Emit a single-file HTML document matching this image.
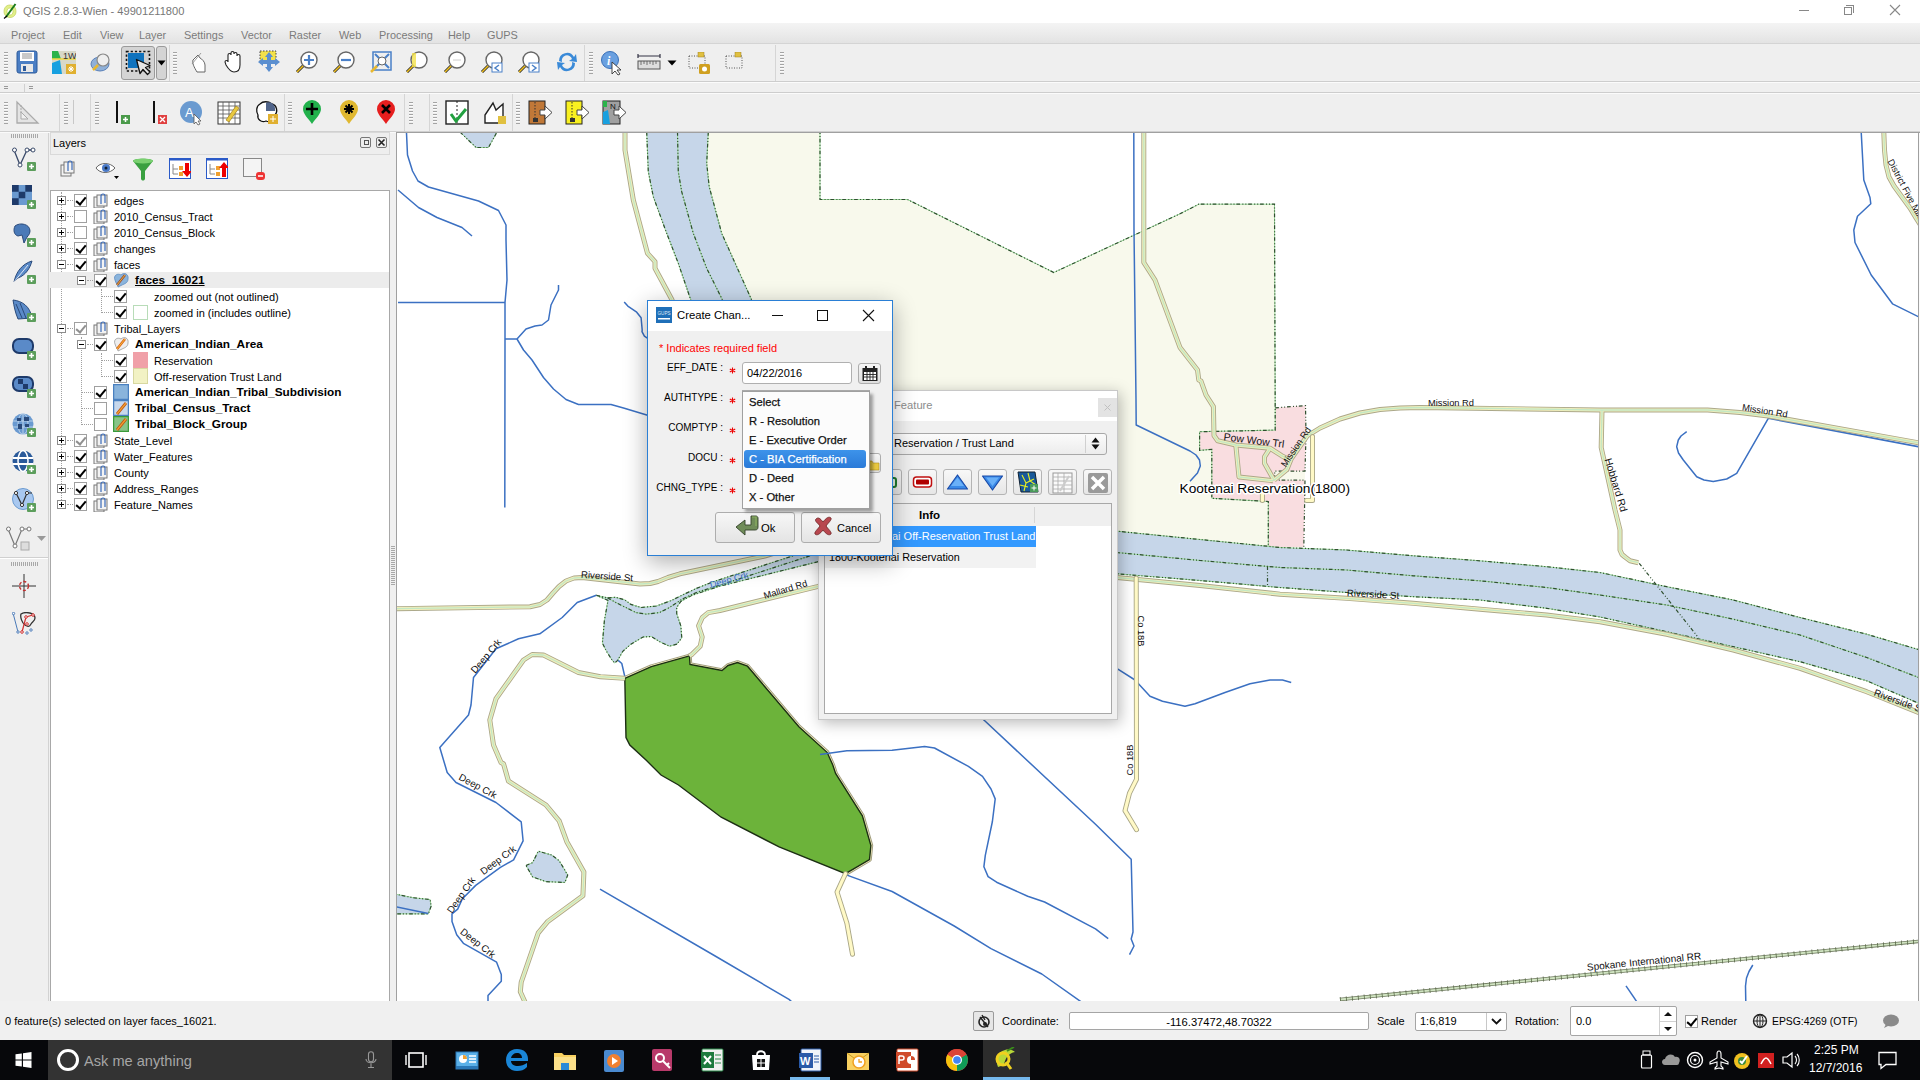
<!DOCTYPE html><html><head><meta charset="utf-8"><style>
*{box-sizing:border-box;margin:0;padding:0}
html,body{width:1920px;height:1080px;overflow:hidden;background:#f0f0f0;font-family:"Liberation Sans",sans-serif;font-size:11px;color:#000}
.a{position:absolute}
.t{position:absolute;white-space:nowrap;line-height:13px}
.grip{position:absolute;width:4px;background:repeating-linear-gradient(#a4a4a4 0 1px,#fbfbfb 1px 2px,transparent 2px 3px)}
.hgrip{position:absolute;height:4px;background:repeating-linear-gradient(90deg,#a8a8a8 0 1px,transparent 1px 2px)}
.vsep{position:absolute;width:1px;background:#d5d5d5}
.exp{position:absolute;width:9px;height:9px;border:1px solid #8c8c8c;background:#fff}
.exp:before{content:"";position:absolute;left:1px;top:3px;width:5px;height:1px;background:#000}
.exp.p:after{content:"";position:absolute;left:3px;top:1px;width:1px;height:5px;background:#000}
.cb{position:absolute;width:13px;height:13px;border:1px solid #a0a0a0;background:#fff}
.cb.c:after{content:"";position:absolute;left:3px;top:0px;width:4px;height:8px;border:solid #000;border-width:0 2px 2px 0;transform:rotate(40deg)}
.cb.g:after{border-color:#909090}
.lt{position:absolute;font-size:11px;line-height:13px;white-space:nowrap}
.b{font-weight:bold;font-size:11.8px}
.dl{position:absolute;border-left:1px dotted #a0a0a0}
.dh{position:absolute;border-top:1px dotted #a0a0a0}
.btn{position:absolute;border:1px solid #adadad;border-radius:2px;background:linear-gradient(#f6f6f6,#dedede)}
.ml{position:absolute;font-size:9.3px;white-space:nowrap;line-height:11px;color:#111}
</style></head><body>
<div class="a" style="left:0;top:0;width:1920px;height:23px;background:#fff">
<svg class="a" style="left:3px;top:3px" width="14" height="16" viewBox="0 0 14 16">
<path d="M7 2 C2.5 2 1 5.5 1 8.5 C1 12 3.5 14.5 7 14.5 C10.5 14.5 13 12 13 8.5 C13 5 11 2 7 2Z M7 5 C9 5 10 6.5 10 8.5 C10 10.5 9 12 7 12 C5 12 4 10.5 4 8.5 C4 6.5 5 5 7 5Z" fill="#e2ef8a" stroke="#b7c94a" stroke-width="0.6"/>
<path d="M3 14 L12.5 1" stroke="#1a7a1a" stroke-width="2"/><path d="M1 15.5 L4 13" stroke="#000" stroke-width="1.2"/>
</svg>
<div class="t" style="left:23px;top:5px;font-size:11.1px;color:#777">QGIS 2.8.3-Wien - 49901211800</div>
<div class="a" style="left:1799px;top:10px;width:10px;height:1px;background:#888"></div>
<div class="a" style="left:1844px;top:7px;width:8px;height:8px;border:1px solid #888"></div>
<div class="a" style="left:1846px;top:5px;width:8px;height:8px;border-top:1px solid #888;border-right:1px solid #888"></div>
<svg class="a" style="left:1889px;top:4px" width="12" height="12"><path d="M1 1L11 11M11 1L1 11" stroke="#888" stroke-width="1.1"/></svg>
</div>
<div class="a" style="left:0;top:23px;width:1920px;height:21px;background:linear-gradient(#f4f4f4,#e3e3e3);border-bottom:1px solid #d4d4d4">
<span class="t" style="left:11px;top:6px;font-size:10.9px;color:#7b7b7b">Project</span>
<span class="t" style="left:63px;top:6px;font-size:10.9px;color:#7b7b7b">Edit</span>
<span class="t" style="left:100px;top:6px;font-size:10.9px;color:#7b7b7b">View</span>
<span class="t" style="left:139px;top:6px;font-size:10.9px;color:#7b7b7b">Layer</span>
<span class="t" style="left:184px;top:6px;font-size:10.9px;color:#7b7b7b">Settings</span>
<span class="t" style="left:241px;top:6px;font-size:10.9px;color:#7b7b7b">Vector</span>
<span class="t" style="left:289px;top:6px;font-size:10.9px;color:#7b7b7b">Raster</span>
<span class="t" style="left:339px;top:6px;font-size:10.9px;color:#7b7b7b">Web</span>
<span class="t" style="left:379px;top:6px;font-size:10.9px;color:#7b7b7b">Processing</span>
<span class="t" style="left:448px;top:6px;font-size:10.9px;color:#7b7b7b">Help</span>
<span class="t" style="left:487px;top:6px;font-size:10.9px;color:#7b7b7b">GUPS</span>
</div>
<div class="a" style="left:0;top:44px;width:1920px;height:38px;background:#efefef;border-bottom:1px solid #cdcdcd"></div>
<div class="a" style="left:0;top:82px;width:1920px;height:1px;background:#fbfbfb"></div>
<div class="a" style="left:0;top:83px;width:1920px;height:10px;background:#efefef;border-bottom:1px solid #cdcdcd"></div>
<div class="a" style="left:0;top:93px;width:1920px;height:1px;background:#fbfbfb"></div>
<div class="a" style="left:0;top:94px;width:1920px;height:38px;background:#efefef"></div>
<div class="a" style="left:0;top:131px;width:1920px;height:1px;background:#d0d0d0"></div>
<div class="a" style="left:4px;top:86px;width:4px;height:1px;background:#999"></div><div class="a" style="left:4px;top:88px;width:4px;height:1px;background:#999"></div>
<div class="a" style="left:24px;top:84px;width:1px;height:9px;background:#d0d0d0"></div>
<div class="a" style="left:29px;top:86px;width:4px;height:1px;background:#999"></div><div class="a" style="left:29px;top:88px;width:4px;height:1px;background:#999"></div>
<div class="grip" style="left:4px;top:52px;height:22px"></div>
<div class="grip" style="left:173px;top:52px;height:22px"></div>
<div class="grip" style="left:589px;top:52px;height:22px"></div>
<div class="grip" style="left:780px;top:52px;height:22px"></div>
<div class="vsep" style="left:169px;top:45px;height:36px"></div>
<div class="vsep" style="left:584px;top:45px;height:36px"></div>
<div class="vsep" style="left:775px;top:45px;height:36px"></div>
<div class="grip" style="left:4px;top:102px;height:22px"></div>
<div class="grip" style="left:64px;top:102px;height:22px"></div>
<div class="grip" style="left:95px;top:102px;height:22px"></div>
<div class="grip" style="left:288px;top:102px;height:22px"></div>
<div class="grip" style="left:409px;top:102px;height:22px"></div>
<div class="grip" style="left:433px;top:102px;height:22px"></div>
<div class="grip" style="left:516px;top:102px;height:22px"></div>
<div class="vsep" style="left:59px;top:94px;height:37px"></div>
<div class="vsep" style="left:90px;top:94px;height:37px"></div>
<div class="vsep" style="left:284px;top:94px;height:37px"></div>
<div class="vsep" style="left:404px;top:94px;height:37px"></div>
<div class="vsep" style="left:429px;top:94px;height:37px"></div>
<div class="vsep" style="left:512px;top:94px;height:37px"></div>
<div class="vsep" style="left:73px;top:100px;height:24px;background:#c8c8c8"></div>
<svg class="a" style="left:16px;top:50px" width="24" height="24" viewBox="0 0 24 24"><rect x="1" y="1" width="20" height="22" rx="2" fill="#4a7ec4" stroke="#2d5a9a"/><rect x="4" y="2" width="14" height="9" fill="#fff"/><path d="M6 4h10M6 6h10M6 8h10" stroke="#777" stroke-width="0.8"/><rect x="5" y="14" width="12" height="8" fill="#e8e8e8"/><rect x="7" y="16" width="3" height="5" fill="#2d5a9a"/></svg>
<svg class="a" style="left:52px;top:50px" width="24" height="24" viewBox="0 0 24 24"><rect x="0" y="1" width="24" height="23" fill="#d8d8c8"/><path d="M0 1h6l3 8H0z" fill="#2bb34a"/><path d="M0 13 L8 10 L10 24 H0z" fill="#16a0e0"/><path d="M0 9h24" stroke="#f0d840" stroke-width="1.5"/><text x="11" y="9" font-size="9" font-family="Liberation Sans" fill="#333">1W</text><rect x="14" y="14" width="10" height="10" fill="#e0b030"/><path d="M19 16v6M16 19h6M17 17l4 4M21 17l-4 4" stroke="#fff" stroke-width="1"/></svg>
<svg class="a" style="left:89px;top:50px" width="24" height="24" viewBox="0 0 24 24"><ellipse cx="11" cy="14" rx="9" ry="7" fill="#8fb0d8" stroke="#5a80b8"/><circle cx="14" cy="10" r="6" fill="#eee" stroke="#888" stroke-width="1.2"/><path d="M9 15L4 20" stroke="#e8b830" stroke-width="2.5"/></svg>
<div class="a" style="left:121px;top:46px;width:34px;height:34px;border:1px solid #9a9a9a;border-radius:3px;background:#d4d4d4"></div>
<div class="a" style="left:156px;top:46px;width:11px;height:34px;border:1px solid #9a9a9a;border-radius:3px;background:#d4d4d4"></div>
<svg class="a" style="left:157px;top:60px" width="9" height="6"><path d="M0.5 0.5h8l-4 5z" fill="#000"/></svg>
<svg class="a" style="left:121px;top:46px" width="34" height="34" viewBox="0 0 34 34"><rect x="5.5" y="5.5" width="23" height="19.5" fill="#cfcfcf" stroke="#111" stroke-width="1.6" stroke-dasharray="2.2 2"/><rect x="7" y="7" width="16" height="15" fill="#0f72bd"/><path d="M15.5 13.5 L19 27.5 L22 23.5 L26.5 28.5 L29 26 L24.5 21.5 L29 19.5 Z" fill="#e6e6e6" stroke="#111" stroke-width="1.3" stroke-linejoin="round"/></svg>
<svg class="a" style="left:188px;top:50px" width="24" height="24" viewBox="0 0 24 24"><path d="M9 22 C6 17 4 13 5 10 L10 5 L12 8 C14 9 17 12 17 15 L17 22 Z" fill="#fff" stroke="#666" stroke-width="1"/><path d="M4 14 L13 3" stroke="#888" stroke-width="0.8"/></svg>
<svg class="a" style="left:222px;top:49px" width="24" height="24" viewBox="0 0 24 24"><path d="M6 13 V6 a1.5 1.5 0 0 1 3 0 V4 a1.5 1.5 0 0 1 3 0 V5 a1.5 1.5 0 0 1 3 0 V7 a1.5 1.5 0 0 1 3 0 V16 C18 20 16 23 12 23 C9 23 7 21 4 16 L3 13 a1.5 1.5 0 0 1 3 0z" fill="#fff" stroke="#222" stroke-width="1.1"/></svg>
<svg class="a" style="left:257px;top:50px" width="24" height="24" viewBox="0 0 24 24"><rect x="3" y="1" width="16" height="12" fill="#f3e14a" stroke="#444" stroke-dasharray="1.5 1.5"/><path d="M12 2 L8 7 H16Z M12 22 L8 17 H16Z M1 12 L6 8 V16Z M23 12 L18 8 V16Z" fill="#5b8fd0"/><rect x="10" y="7" width="4" height="10" fill="#5b8fd0"/><rect x="6" y="10" width="12" height="4" fill="#5b8fd0"/></svg>
<svg class="a" style="left:295px;top:50px" width="24" height="24" viewBox="0 0 24 24"><circle cx="14" cy="10" r="8" fill="#fff" stroke="#666" stroke-width="1.4"/><path d="M8 16 L2 22" stroke="#222" stroke-width="3"/><path d="M8 16 L2 22" stroke="#f0c020" stroke-width="1.6"/><path d="M14 5v10M9 10h10" stroke="#4a80c8" stroke-width="2.2"/></svg>
<svg class="a" style="left:332px;top:50px" width="24" height="24" viewBox="0 0 24 24"><circle cx="14" cy="10" r="8" fill="#fff" stroke="#666" stroke-width="1.4"/><path d="M8 16 L2 22" stroke="#222" stroke-width="3"/><path d="M8 16 L2 22" stroke="#f0c020" stroke-width="1.6"/><path d="M9 10h10" stroke="#4a80c8" stroke-width="2.2"/></svg>
<svg class="a" style="left:369px;top:50px" width="24" height="24" viewBox="0 0 24 24"><rect x="4" y="2" width="18" height="18" fill="none" stroke="#4a80c8" stroke-width="1.5"/><path d="M6 4l5 5M20 4l-5 5M6 18l5-5M20 18l-5-5" stroke="#4a80c8" stroke-width="2"/><circle cx="13" cy="11" r="4" fill="#fff" stroke="#666"/><path d="M8 16L2 22" stroke="#e8b830" stroke-width="2.5"/></svg>
<svg class="a" style="left:405px;top:50px" width="24" height="24" viewBox="0 0 24 24"><circle cx="14" cy="10" r="8" fill="#fff" stroke="#666" stroke-width="1.4"/><path d="M8 16 L2 22" stroke="#222" stroke-width="3"/><path d="M8 16 L2 22" stroke="#f0c020" stroke-width="1.6"/><rect x="7" y="3" width="4" height="14" fill="#f3e14a" opacity="0.8"/></svg>
<svg class="a" style="left:443px;top:50px" width="24" height="24" viewBox="0 0 24 24"><circle cx="14" cy="10" r="8" fill="#fff" stroke="#666" stroke-width="1.4"/><path d="M8 16 L2 22" stroke="#222" stroke-width="3"/><path d="M8 16 L2 22" stroke="#f0c020" stroke-width="1.6"/><path d="M10 10h8" stroke="#ccc" stroke-width="1"/></svg>
<svg class="a" style="left:480px;top:50px" width="24" height="24" viewBox="0 0 24 24"><circle cx="14" cy="10" r="8" fill="#fff" stroke="#666" stroke-width="1.4"/><path d="M8 16 L2 22" stroke="#222" stroke-width="3"/><path d="M8 16 L2 22" stroke="#f0c020" stroke-width="1.6"/><rect x="12" y="13" width="10" height="9" fill="#fff" stroke="#4a80c8"/><path d="M19 15l-4 3 4 3" stroke="#4a80c8" stroke-width="1.5" fill="none"/></svg>
<svg class="a" style="left:517px;top:50px" width="24" height="24" viewBox="0 0 24 24"><circle cx="14" cy="10" r="8" fill="#fff" stroke="#666" stroke-width="1.4"/><path d="M8 16 L2 22" stroke="#222" stroke-width="3"/><path d="M8 16 L2 22" stroke="#f0c020" stroke-width="1.6"/><rect x="12" y="13" width="10" height="9" fill="#fff" stroke="#4a80c8"/><path d="M15 15l4 3-4 3" stroke="#4a80c8" stroke-width="1.5" fill="none"/></svg>
<svg class="a" style="left:555px;top:50px" width="24" height="24" viewBox="0 0 24 24"><path d="M4 11 A8 8 0 0 1 19 7 L21 4 L22 12 L14 11 L17 9 A5 5 0 0 0 7 12 Z" fill="#3a8ad8"/><path d="M20 13 A8 8 0 0 1 5 17 L3 20 L2 12 L10 13 L7 15 A5 5 0 0 0 17 12 Z" fill="#3a8ad8"/></svg>
<svg class="a" style="left:600px;top:50px" width="25" height="26" viewBox="0 0 25 26"><circle cx="10" cy="10" r="8.5" fill="#6aa0e0" stroke="#3a70b8"/><text x="7" y="15" font-size="12" font-style="italic" font-weight="bold" font-family="Liberation Serif" fill="#fff">i</text><path d="M12 12 L12 24 L15 21 L18 25 L20 24 L17 20 L21 20Z" fill="#fff" stroke="#333" stroke-width="0.9"/></svg>
<svg class="a" style="left:637px;top:53px" width="24" height="18" viewBox="0 0 24 18"><path d="M1 3h22M1 1v4M23 1v4" stroke="#334" stroke-width="1.2"/><rect x="1" y="8" width="22" height="8" fill="#ddd" stroke="#555"/><path d="M4 8v4M7 8v3M10 8v4M13 8v3M16 8v4M19 8v3" stroke="#555" stroke-width="0.8"/></svg>
<svg class="a" style="left:667px;top:60px" width="10" height="6"><path d="M0.5 0.5h9l-4.5 5z" fill="#000"/></svg>
<svg class="a" style="left:688px;top:52px" width="24" height="24" viewBox="0 0 24 24"><rect x="1" y="4" width="16" height="12" fill="none" stroke="#555" stroke-dasharray="1 1.5"/><rect x="10" y="0" width="6" height="5" fill="#e0c040" stroke="#a08020" stroke-width="0.5"/><rect x="11" y="12" width="11" height="10" rx="1.5" fill="#d0a020"/><circle cx="16.5" cy="17" r="2.5" fill="#fff"/></svg>
<svg class="a" style="left:725px;top:52px" width="24" height="24" viewBox="0 0 24 24"><rect x="1" y="4" width="16" height="12" fill="none" stroke="#555" stroke-dasharray="1 1.5"/><rect x="10" y="0" width="6" height="5" fill="#e0c040" stroke="#a08020" stroke-width="0.5"/></svg>
<svg class="a" style="left:15px;top:100px" width="25" height="25" viewBox="0 0 25 25"><path d="M2 23 L2 2 L23 23 Z" fill="#e4e4e4" stroke="#aaa" stroke-width="1.3"/><path d="M6 19 V12 L13 19 Z" fill="#f0f0f0" stroke="#aaa"/><path d="M5 6h2M5 9h2M5 12h2" stroke="#aaa"/></svg>
<svg class="a" style="left:114px;top:100px" width="18" height="25" viewBox="0 0 18 25"><path d="M3 1 V23" stroke="#111" stroke-width="2"/><rect x="7" y="15" width="9" height="9" fill="#4a9a4a"/><path d="M11.5 17v5M9 19.5h5" stroke="#fff" stroke-width="1.5"/></svg>
<svg class="a" style="left:151px;top:100px" width="18" height="25" viewBox="0 0 18 25"><path d="M3 1 V23" stroke="#111" stroke-width="2"/><rect x="7" y="15" width="9" height="9" fill="#e04040"/><path d="M9 17l5 5M14 17l-5 5" stroke="#fff" stroke-width="1.3"/></svg>
<svg class="a" style="left:180px;top:100px" width="24" height="26" viewBox="0 0 24 26"><circle cx="11" cy="12" r="11" fill="#6a9ad0"/><text x="5" y="17" font-size="13" font-family="Liberation Sans" fill="#fff">A</text><path d="M14 14 L14 24 L16 22 L18 25 L20 24 L18 21 L21 21Z" fill="#fff" stroke="#555" stroke-width="0.8"/></svg>
<svg class="a" style="left:217px;top:100px" width="24" height="25" viewBox="0 0 24 25"><rect x="1" y="2" width="22" height="22" fill="#fff" stroke="#333"/><path d="M1 6h22M1 10h22M1 14h22M1 18h22M6 2v22M12 2v22M18 2v22" stroke="#555" stroke-width="0.8"/><path d="M9 20 L19 6 L22 8 L12 22 Z" fill="#e8c840" stroke="#a08020" stroke-width="0.7"/></svg>
<svg class="a" style="left:255px;top:100px" width="24" height="25" viewBox="0 0 24 25"><path d="M5 4 C1 6 1 12 3 15 C2 19 6 23 11 21 C15 23 20 20 20 15 C23 12 22 5 17 4 C13 1 8 1 5 4Z" fill="#fff" stroke="#111" stroke-width="1.3"/><path d="M11 3 C14 1 19 3 20 8 L20 11 L11 11 Z" fill="#50648a"/><rect x="13" y="14" width="10" height="10" fill="#e0b030"/><path d="M18 16v6M15 19h6" stroke="#fff"/></svg>
<svg class="a" style="left:302px;top:100px" width="20" height="25" viewBox="0 0 20 25"><path d="M10 24 C6 18 1 14 1 9 A9 9 0 0 1 19 9 C19 14 14 18 10 24Z" fill="#22b14c"/><path d="M10 3v12M4 9h12" stroke="#000" stroke-width="2.6"/></svg>
<svg class="a" style="left:339px;top:100px" width="20" height="25" viewBox="0 0 20 25"><path d="M10 24 C6 18 1 14 1 9 A9 9 0 0 1 19 9 C19 14 14 18 10 24Z" fill="#e0b830"/><path d="M10 4v10M5 9h10M6.5 5.5l7 7M13.5 5.5l-7 7" stroke="#000" stroke-width="2"/></svg>
<svg class="a" style="left:376px;top:100px" width="20" height="25" viewBox="0 0 20 25"><path d="M10 24 C6 18 1 14 1 9 A9 9 0 0 1 19 9 C19 14 14 18 10 24Z" fill="#e61e1e"/><path d="M6 5l8 8M14 5l-8 8" stroke="#000" stroke-width="2.6"/></svg>
<svg class="a" style="left:445px;top:100px" width="24" height="25" viewBox="0 0 24 25"><rect x="1" y="1" width="22" height="23" fill="#fff" stroke="#222" stroke-width="1.4"/><path d="M12 1v23" stroke="#222" stroke-dasharray="2 2"/><path d="M6 14 L11 21 L21 9" stroke="#22a040" stroke-width="3" fill="none"/></svg>
<svg class="a" style="left:483px;top:100px" width="24" height="25" viewBox="0 0 24 25"><path d="M2 23 L2 15 L10 3 L13 10 L20 4 L20 23 Z" fill="#fff" stroke="#222" stroke-width="1.4"/><rect x="15" y="16" width="8" height="8" fill="#e0c040"/></svg>
<svg class="a" style="left:528px;top:100px" width="25" height="25" viewBox="0 0 25 25"><rect x="1" y="1" width="16" height="23" fill="#c07838" stroke="#222"/><path d="M7 2v18" stroke="#333" stroke-dasharray="1.5 1.5"/><rect x="5" y="18" width="5" height="4" fill="#333"/><path d="M12 10h5v-4l7 6.5-7 6.5v-4h-5z" fill="#fff" stroke="#444"/></svg>
<svg class="a" style="left:565px;top:100px" width="25" height="25" viewBox="0 0 25 25"><rect x="1" y="1" width="16" height="23" fill="#f8f020" stroke="#222"/><path d="M7 2v18" stroke="#333" stroke-dasharray="1.5 1.5"/><rect x="5" y="18" width="5" height="4" fill="#333"/><path d="M12 10h5v-4l7 6.5-7 6.5v-4h-5z" fill="#fff" stroke="#444"/></svg>
<svg class="a" style="left:602px;top:100px" width="25" height="25" viewBox="0 0 25 25"><rect x="1" y="1" width="17" height="23" fill="#a0a0a0" stroke="#222"/><path d="M1 12 L6 10 L8 24 H1Z" fill="#18a0e0"/><path d="M1 1h4v6H1z" fill="#2bb34a"/><text x="8" y="9" font-size="8" font-family="Liberation Sans" fill="#111">N</text><path d="M12 10h5v-4l7 6.5-7 6.5v-4h-5z" fill="#fff" stroke="#444"/></svg>
<div class="a" style="left:0;top:132px;width:49px;height:869px;background:#efefef;border-right:1px solid #d2d2d2"></div>
<div class="hgrip" style="left:11px;top:134px;width:27px"></div>
<div class="hgrip" style="left:11px;top:562px;width:27px"></div>
<div class="a" style="left:0;top:557px;width:48px;height:1px;background:#d0d0d0"></div><div class="a" style="left:0;top:558px;width:48px;height:1px;background:#fff"></div>
<svg class="a" style="left:12px;top:147px" width="24" height="24" viewBox="0 0 24 24"><path d="M2 3 L8 18 L15 3 M15 3 H21" stroke="#3a4a6a" stroke-width="1.3" fill="none"/><circle cx="2.5" cy="3" r="2" fill="#fff" stroke="#3a4a6a"/><circle cx="8" cy="18" r="2" fill="#fff" stroke="#3a4a6a"/><circle cx="15" cy="3" r="2" fill="#fff" stroke="#3a4a6a"/><circle cx="21" cy="3" r="2" fill="#fff" stroke="#3a4a6a"/><rect x="15" y="15" width="9" height="9" rx="1" fill="#5c9e5c"/><path d="M19.5 17v5M17 19.5h5" stroke="#fff" stroke-width="1.6"/></svg>
<svg class="a" style="left:12px;top:185px" width="24" height="24" viewBox="0 0 24 24"><rect x="0" y="0" width="20" height="20" fill="#6a9ad0"/><path d="M0 0h6.7v6.7H0zM13.3 0h6.7v6.7h-6.7zM6.7 6.7h6.6v6.6H6.7zM0 13.3h6.7v6.7H0z" fill="#1e3a6a"/><rect x="15" y="15" width="9" height="9" rx="1" fill="#5c9e5c"/><path d="M19.5 17v5M17 19.5h5" stroke="#fff" stroke-width="1.6"/></svg>
<svg class="a" style="left:12px;top:223px" width="24" height="24" viewBox="0 0 24 24"><path d="M3 3 C8 -1 18 1 18 8 C18 12 15 13 14 16 L12 20 L10 12 L6 13 C2 12 1 7 3 3Z" fill="#4a7ab8" stroke="#2a4a7a"/><rect x="15" y="15" width="9" height="9" rx="1" fill="#5c9e5c"/><path d="M19.5 17v5M17 19.5h5" stroke="#fff" stroke-width="1.6"/></svg>
<svg class="a" style="left:12px;top:260px" width="24" height="24" viewBox="0 0 24 24"><path d="M2 22 C4 12 10 4 20 1 C18 8 14 15 6 18 Z" fill="#5a8ac8" stroke="#2a4a7a"/><path d="M2 22 L16 5" stroke="#fff" stroke-width="0.8"/><rect x="15" y="15" width="9" height="9" rx="1" fill="#5c9e5c"/><path d="M19.5 17v5M17 19.5h5" stroke="#fff" stroke-width="1.6"/></svg>
<svg class="a" style="left:12px;top:298px" width="24" height="24" viewBox="0 0 24 24"><path d="M1 2 C10 3 18 8 20 20 L6 21 C3 14 2 8 1 2Z" fill="#5a8ac8" stroke="#2a4a7a"/><path d="M4 6 L10 20M8 5 L14 20" stroke="#2a4a7a"/><rect x="15" y="15" width="9" height="9" rx="1" fill="#5c9e5c"/><path d="M19.5 17v5M17 19.5h5" stroke="#fff" stroke-width="1.6"/></svg>
<svg class="a" style="left:12px;top:338px" width="24" height="24" viewBox="0 0 24 24"><rect x="1" y="1" width="20" height="14" rx="6" fill="#5a8ac8" stroke="#1e3a6a" stroke-width="2"/><rect x="15" y="13" width="9" height="9" rx="1" fill="#5c9e5c"/><path d="M19.5 15v5M17 17.5h5" stroke="#fff" stroke-width="1.6"/></svg>
<svg class="a" style="left:12px;top:376px" width="24" height="24" viewBox="0 0 24 24"><rect x="1" y="1" width="20" height="14" rx="6" fill="#5a8ac8" stroke="#1e3a6a" stroke-width="2"/><path d="M6 3h5v5H6zM11 8h5v5h-5z" fill="#1e3a6a"/><rect x="15" y="13" width="9" height="9" rx="1" fill="#5c9e5c"/><path d="M19.5 15v5M17 17.5h5" stroke="#fff" stroke-width="1.6"/></svg>
<svg class="a" style="left:12px;top:413px" width="24" height="24" viewBox="0 0 24 24"><circle cx="11" cy="11" r="10.5" fill="#6a9ad0"/><ellipse cx="11" cy="11" rx="5" ry="10.5" fill="none" stroke="#cde" stroke-width="0.8"/><path d="M1 8h20M1 14h20M11 1v20" stroke="#cde" stroke-width="0.8"/><path d="M5 5h4v3H5zM12 4h5v4h-5zM6 11h4v5H6zM13 11h4v3h-4z" fill="#2a4a7a"/><rect x="15" y="15" width="9" height="9" rx="1" fill="#5c9e5c"/><path d="M19.5 17v5M17 19.5h5" stroke="#fff" stroke-width="1.6"/></svg>
<svg class="a" style="left:12px;top:450px" width="24" height="24" viewBox="0 0 24 24"><circle cx="11" cy="11" r="10.5" fill="#2a5a9a"/><path d="M1 8h20M1 14h20" stroke="#fff" stroke-width="2"/><ellipse cx="11" cy="11" rx="5" ry="10.5" fill="none" stroke="#fff" stroke-width="1.5"/><rect x="15" y="15" width="9" height="9" rx="1" fill="#5c9e5c"/><path d="M19.5 17v5M17 19.5h5" stroke="#fff" stroke-width="1.6"/></svg>
<svg class="a" style="left:12px;top:488px" width="24" height="24" viewBox="0 0 24 24"><circle cx="11" cy="11" r="10.5" fill="#a8c8f0" stroke="#6a9ad0"/><path d="M4 5 L10 17 L15 5 L20 5" stroke="#333" stroke-width="1.2" fill="none"/><circle cx="4" cy="5" r="1.6" fill="#fff" stroke="#333"/><circle cx="10" cy="17" r="1.6" fill="#fff" stroke="#333"/><circle cx="15" cy="5" r="1.6" fill="#fff" stroke="#333"/><rect x="15" y="15" width="9" height="9" rx="1" fill="#5c9e5c"/><path d="M19.5 17v5M17 19.5h5" stroke="#fff" stroke-width="1.6"/></svg>
<svg class="a" style="left:6px;top:526px" width="26" height="26" viewBox="0 0 26 26"><path d="M2 3 L9 20 L16 3 H24" stroke="#777" stroke-width="1.2" fill="none"/><circle cx="2.5" cy="3" r="2" fill="#fff" stroke="#777"/><circle cx="9" cy="20" r="2" fill="#fff" stroke="#777"/><circle cx="16" cy="3" r="2" fill="#fff" stroke="#777"/><circle cx="23" cy="3" r="2" fill="#fff" stroke="#777"/><rect x="15" y="16" width="8" height="8" fill="#ddd" stroke="#aaa"/></svg>
<svg class="a" style="left:37px;top:536px" width="9" height="5"><path d="M0 0h9l-4.5 5z" fill="#999"/></svg>
<svg class="a" style="left:12px;top:574px" width="24" height="24" viewBox="0 0 24 24"><path d="M12 0v24M0 12h24" stroke="#333" stroke-width="1"/><circle cx="12" cy="12" r="4.5" fill="none" stroke="#c03030" stroke-width="1.4" stroke-dasharray="3 2"/></svg>
<svg class="a" style="left:12px;top:612px" width="25" height="25" viewBox="0 0 25 25"><path d="M1 1 L6 20" stroke="#4a7ab8" stroke-width="1"/><circle cx="1.5" cy="1.5" r="1.2" fill="#fff" stroke="#4a7ab8"/><circle cx="6" cy="20" r="1.2" fill="#fff" stroke="#4a7ab8"/><path d="M9 2 C14 -1 23 1 23 6 C23 9 20 10 19 12 C17 16 15 14 13 13 C10 11 8 5 9 2Z" fill="none" stroke="#333" stroke-width="1.3"/><path d="M10 20 L14 5 L21 3" stroke="#d03030" stroke-width="1.2" fill="none"/><circle cx="14" cy="5" r="1.3" fill="#fff" stroke="#d03030"/><circle cx="21" cy="3" r="1.3" fill="#fff" stroke="#d03030"/><circle cx="10" cy="20" r="1.3" fill="#fff" stroke="#d03030"/><circle cx="15" cy="12" r="1.3" fill="#fff" stroke="#d03030"/><circle cx="15" cy="21" r="1.2" fill="#fff" stroke="#4a7ab8"/><circle cx="19" cy="18" r="1.2" fill="#fff" stroke="#4a7ab8"/></svg>
<div class="a" style="left:49px;top:132px;width:342px;height:869px;background:#f0f0f0"></div>
<div class="a" style="left:0;top:132px;width:396px;height:1px;background:#fafafa"></div>
<div class="a" style="left:391px;top:546px;width:4px;height:40px;background:repeating-linear-gradient(#a8a8a8 0 1px,transparent 1px 2px)"></div>
<div class="a" style="left:50px;top:132px;width:340px;height:23px;border:1px solid #d9d9d9;background:#eeeeee"></div>
<div class="t" style="left:53px;top:137px;font-size:11px">Layers</div>
<div class="a" style="left:360px;top:137px;width:11px;height:11px;border:1px solid #777;border-radius:2px"></div>
<div class="a" style="left:364px;top:140px;width:5px;height:5px;border:1px solid #555"></div>
<div class="a" style="left:376px;top:137px;width:11px;height:11px;border:1px solid #777;border-radius:2px"></div>
<svg class="a" style="left:376px;top:137px" width="11" height="11"><path d="M2.5 2.5l6 6M8.5 2.5l-6 6" stroke="#222" stroke-width="1.6"/></svg>
<svg class="a" style="left:60px;top:159px" width="16" height="18" viewBox="0 0 16 18"><rect x="1" y="6" width="10" height="11" fill="#f3f3f3" stroke="#777"/><rect x="4" y="3" width="10" height="11" fill="#f3f3f3" stroke="#777"/><path d="M8 12V4a2 2 0 0 1 4 0v7" stroke="#3a6ab8" stroke-width="1.2" fill="none"/></svg>
<svg class="a" style="left:95px;top:160px" width="21" height="17" viewBox="0 0 21 17"><path d="M1 8 C5 2 15 2 20 8 C15 14 5 14 1 8Z" fill="#fff" stroke="#666"/><circle cx="11" cy="8" r="4" fill="#4a7ac8"/><circle cx="11" cy="8" r="1.5" fill="#123"/></svg>
<svg class="a" style="left:114px;top:176px" width="5" height="3"><path d="M0 0h5l-2.5 3z" fill="#000"/></svg>
<svg class="a" style="left:132px;top:158px" width="22" height="23" viewBox="0 0 22 23"><path d="M1 3 C1 0 21 0 21 3 L13 13 V21 C12 23 10 23 9 21 V13 Z" fill="#3aa040"/><ellipse cx="11" cy="3" rx="10" ry="2.5" fill="#7ad070"/></svg>
<svg class="a" style="left:169px;top:158px" width="22" height="22" viewBox="0 0 22 22"><rect x="0.5" y="0.5" width="21" height="20" fill="#fff" stroke="#2a5ac8"/><rect x="0.5" y="0.5" width="21" height="2" fill="#2a5ac8"/><path d="M4 6v10h5M4 11h5" stroke="#888" fill="none"/><rect x="10" y="8" width="4" height="4" fill="#f0a030"/><rect x="10" y="14" width="4" height="4" fill="#f0a030"/><path d="M16 5v8h-3l5 6 5-6h-3V5z" fill="#e00"/></svg>
<svg class="a" style="left:206px;top:158px" width="22" height="22" viewBox="0 0 22 22"><rect x="0.5" y="0.5" width="21" height="20" fill="#fff" stroke="#2a5ac8"/><rect x="0.5" y="0.5" width="21" height="2" fill="#2a5ac8"/><path d="M4 6v10h5M4 11h5" stroke="#888" fill="none"/><rect x="10" y="8" width="4" height="4" fill="#f0a030"/><rect x="10" y="14" width="4" height="4" fill="#f0a030"/><path d="M16 19v-9h-3l5-6 5 6h-3v9z" fill="#e00"/></svg>
<svg class="a" style="left:243px;top:158px" width="23" height="23" viewBox="0 0 23 23"><rect x="0.5" y="0.5" width="18" height="18" fill="#f4f4f4" stroke="#888"/><rect x="13" y="14" width="9" height="8" rx="3" fill="#e33"/><path d="M15 18h5" stroke="#fff" stroke-width="1.5"/></svg>
<div class="a" style="left:50px;top:190px;width:340px;height:812px;background:#fff;border:1px solid #a8a8a8"></div>
<div class="dl" style="left:61px;top:192px;height:312px"></div>
<div class="dl" style="left:81px;top:337px;height:88px"></div>
<div class="dl" style="left:101px;top:289px;height:24px"></div>
<div class="dl" style="left:101px;top:353px;height:24px"></div>
<div class="a" style="left:50px;top:272px;width:339px;height:16px;background:#ececec"></div>
<div class="exp p" style="left:57px;top:196px"></div>
<div class="dh" style="left:67px;top:200px;width:6px"></div>
<div class="cb c" style="left:74px;top:194px"></div>
<svg class="a" style="left:93px;top:192px" width="16" height="16" viewBox="0 0 16 16"><rect x="1" y="5" width="10" height="11" fill="#f3f3f3" stroke="#777"/><rect x="4" y="3" width="10" height="11" fill="#f3f3f3" stroke="#777"/><path d="M8 12V4a2 2 0 0 1 4 0v7" stroke="#3a6ab8" stroke-width="1.2" fill="none"/></svg>
<div class="lt" style="left:114px;top:195px">edges</div>
<div class="exp p" style="left:57px;top:212px"></div>
<div class="dh" style="left:67px;top:216px;width:6px"></div>
<div class="cb " style="left:74px;top:210px"></div>
<svg class="a" style="left:93px;top:208px" width="16" height="16" viewBox="0 0 16 16"><rect x="1" y="5" width="10" height="11" fill="#f3f3f3" stroke="#777"/><rect x="4" y="3" width="10" height="11" fill="#f3f3f3" stroke="#777"/><path d="M8 12V4a2 2 0 0 1 4 0v7" stroke="#3a6ab8" stroke-width="1.2" fill="none"/></svg>
<div class="lt" style="left:114px;top:211px">2010_Census_Tract</div>
<div class="exp p" style="left:57px;top:228px"></div>
<div class="dh" style="left:67px;top:232px;width:6px"></div>
<div class="cb " style="left:74px;top:226px"></div>
<svg class="a" style="left:93px;top:224px" width="16" height="16" viewBox="0 0 16 16"><rect x="1" y="5" width="10" height="11" fill="#f3f3f3" stroke="#777"/><rect x="4" y="3" width="10" height="11" fill="#f3f3f3" stroke="#777"/><path d="M8 12V4a2 2 0 0 1 4 0v7" stroke="#3a6ab8" stroke-width="1.2" fill="none"/></svg>
<div class="lt" style="left:114px;top:227px">2010_Census_Block</div>
<div class="exp p" style="left:57px;top:244px"></div>
<div class="dh" style="left:67px;top:248px;width:6px"></div>
<div class="cb c" style="left:74px;top:242px"></div>
<svg class="a" style="left:93px;top:240px" width="16" height="16" viewBox="0 0 16 16"><rect x="1" y="5" width="10" height="11" fill="#f3f3f3" stroke="#777"/><rect x="4" y="3" width="10" height="11" fill="#f3f3f3" stroke="#777"/><path d="M8 12V4a2 2 0 0 1 4 0v7" stroke="#3a6ab8" stroke-width="1.2" fill="none"/></svg>
<div class="lt" style="left:114px;top:243px">changes</div>
<div class="exp " style="left:57px;top:260px"></div>
<div class="dh" style="left:67px;top:264px;width:6px"></div>
<div class="cb c" style="left:74px;top:258px"></div>
<svg class="a" style="left:93px;top:256px" width="16" height="16" viewBox="0 0 16 16"><rect x="1" y="5" width="10" height="11" fill="#f3f3f3" stroke="#777"/><rect x="4" y="3" width="10" height="11" fill="#f3f3f3" stroke="#777"/><path d="M8 12V4a2 2 0 0 1 4 0v7" stroke="#3a6ab8" stroke-width="1.2" fill="none"/></svg>
<div class="lt" style="left:114px;top:259px">faces</div>
<div class="exp" style="left:77px;top:276px"></div>
<div class="dh" style="left:87px;top:280px;width:6px"></div>
<div class="cb c" style="left:94px;top:274px"></div>
<svg class="a" style="left:113px;top:272px" width="16" height="16" viewBox="0 0 16 16"><path d="M2 8 C0 3 5 1 8 3 C11 0 16 2 15 7 C15 11 11 12 9 13 L5 15 C5 13 3 12 2 8Z" fill="#8ab4dc" stroke="#5a8ac0" stroke-width="0.8"/><path d="M4 13 L12 3" stroke="#a05030" stroke-width="2.5"/><path d="M4 13 L12 3" stroke="#e0b040" stroke-width="1"/></svg>
<div class="lt b" style="left:135px;top:274px;text-decoration:underline">faces_16021</div>
<div class="dh" style="left:102px;top:296px;width:11px"></div>
<div class="cb c" style="left:114px;top:290px"></div>
<div class="lt" style="left:154px;top:291px">zoomed out (not outlined)</div>
<div class="dh" style="left:102px;top:312px;width:11px"></div>
<div class="cb c" style="left:114px;top:306px"></div>
<div class="a" style="left:133px;top:305px;width:15px;height:15px;border:1px solid #b8dcb8;background:#fff"></div>
<div class="lt" style="left:154px;top:307px">zoomed in (includes outline)</div>
<div class="exp " style="left:57px;top:324px"></div>
<div class="dh" style="left:67px;top:328px;width:6px"></div>
<div class="cb c g" style="left:74px;top:322px"></div>
<svg class="a" style="left:93px;top:320px" width="16" height="16" viewBox="0 0 16 16"><rect x="1" y="5" width="10" height="11" fill="#f3f3f3" stroke="#777"/><rect x="4" y="3" width="10" height="11" fill="#f3f3f3" stroke="#777"/><path d="M8 12V4a2 2 0 0 1 4 0v7" stroke="#3a6ab8" stroke-width="1.2" fill="none"/></svg>
<div class="lt" style="left:114px;top:323px">Tribal_Layers</div>
<div class="exp" style="left:77px;top:340px"></div>
<div class="dh" style="left:87px;top:344px;width:6px"></div>
<div class="cb c" style="left:94px;top:338px"></div>
<svg class="a" style="left:113px;top:336px" width="16" height="16" viewBox="0 0 16 16"><path d="M2 8 C0 3 5 1 8 3 C11 0 16 2 15 7 C15 11 11 12 9 13 L5 15 C5 13 3 12 2 8Z" fill="#eee" stroke="#999" stroke-width="0.8"/><path d="M4 13 L12 3" stroke="#e06010" stroke-width="2.5"/><path d="M4 13 L12 3" stroke="#f0c040" stroke-width="1"/></svg>
<div class="lt b" style="left:135px;top:338px">American_Indian_Area</div>
<div class="dh" style="left:102px;top:360px;width:11px"></div>
<div class="cb c" style="left:114px;top:354px"></div>
<div class="a" style="left:133px;top:352px;width:15px;height:16px;background:#f0a0a8"></div>
<div class="lt" style="left:154px;top:355px">Reservation</div>
<div class="dh" style="left:102px;top:376px;width:11px"></div>
<div class="cb c" style="left:114px;top:370px"></div>
<div class="a" style="left:133px;top:368px;width:15px;height:16px;background:#f2f2c4;border:1px solid #d8d8a0"></div>
<div class="lt" style="left:154px;top:371px">Off-reservation Trust Land</div>
<div class="dh" style="left:82px;top:392px;width:11px"></div>
<div class="cb c" style="left:94px;top:386px"></div>
<svg class="a" style="left:113px;top:384px" width="16" height="16" viewBox="0 0 16 16"><rect x="0.5" y="0.5" width="15" height="15" fill="#8ab4dc" stroke="#4a80c0" stroke-width="1.5"/></svg>
<div class="lt b" style="left:135px;top:386px">American_Indian_Tribal_Subdivision</div>
<div class="dh" style="left:82px;top:408px;width:11px"></div>
<div class="cb " style="left:94px;top:402px"></div>
<svg class="a" style="left:113px;top:400px" width="16" height="16" viewBox="0 0 16 16"><rect x="0.5" y="0.5" width="15" height="15" fill="#c8d8ec" stroke="#4a80c0" stroke-width="1.5"/><path d="M4 14 L13 3" stroke="#c05010" stroke-width="2.8"/><path d="M4 14 L13 3" stroke="#f0a030" stroke-width="1.2"/></svg>
<div class="lt b" style="left:135px;top:402px">Tribal_Census_Tract</div>
<div class="dh" style="left:82px;top:424px;width:11px"></div>
<div class="cb " style="left:94px;top:418px"></div>
<svg class="a" style="left:113px;top:416px" width="16" height="16" viewBox="0 0 16 16"><rect x="0.5" y="0.5" width="15" height="15" fill="#88c488" stroke="#3a9a3a" stroke-width="1.5"/><path d="M4 14 L13 3" stroke="#c05010" stroke-width="2.8"/><path d="M4 14 L13 3" stroke="#f0a030" stroke-width="1.2"/></svg>
<div class="lt b" style="left:135px;top:418px">Tribal_Block_Group</div>
<div class="exp p" style="left:57px;top:436px"></div>
<div class="dh" style="left:67px;top:440px;width:6px"></div>
<div class="cb c g" style="left:74px;top:434px"></div>
<svg class="a" style="left:93px;top:432px" width="16" height="16" viewBox="0 0 16 16"><rect x="1" y="5" width="10" height="11" fill="#f3f3f3" stroke="#777"/><rect x="4" y="3" width="10" height="11" fill="#f3f3f3" stroke="#777"/><path d="M8 12V4a2 2 0 0 1 4 0v7" stroke="#3a6ab8" stroke-width="1.2" fill="none"/></svg>
<div class="lt" style="left:114px;top:435px">State_Level</div>
<div class="exp p" style="left:57px;top:452px"></div>
<div class="dh" style="left:67px;top:456px;width:6px"></div>
<div class="cb c" style="left:74px;top:450px"></div>
<svg class="a" style="left:93px;top:448px" width="16" height="16" viewBox="0 0 16 16"><rect x="1" y="5" width="10" height="11" fill="#f3f3f3" stroke="#777"/><rect x="4" y="3" width="10" height="11" fill="#f3f3f3" stroke="#777"/><path d="M8 12V4a2 2 0 0 1 4 0v7" stroke="#3a6ab8" stroke-width="1.2" fill="none"/></svg>
<div class="lt" style="left:114px;top:451px">Water_Features</div>
<div class="exp p" style="left:57px;top:468px"></div>
<div class="dh" style="left:67px;top:472px;width:6px"></div>
<div class="cb c" style="left:74px;top:466px"></div>
<svg class="a" style="left:93px;top:464px" width="16" height="16" viewBox="0 0 16 16"><rect x="1" y="5" width="10" height="11" fill="#f3f3f3" stroke="#777"/><rect x="4" y="3" width="10" height="11" fill="#f3f3f3" stroke="#777"/><path d="M8 12V4a2 2 0 0 1 4 0v7" stroke="#3a6ab8" stroke-width="1.2" fill="none"/></svg>
<div class="lt" style="left:114px;top:467px">County</div>
<div class="exp p" style="left:57px;top:484px"></div>
<div class="dh" style="left:67px;top:488px;width:6px"></div>
<div class="cb c" style="left:74px;top:482px"></div>
<svg class="a" style="left:93px;top:480px" width="16" height="16" viewBox="0 0 16 16"><rect x="1" y="5" width="10" height="11" fill="#f3f3f3" stroke="#777"/><rect x="4" y="3" width="10" height="11" fill="#f3f3f3" stroke="#777"/><path d="M8 12V4a2 2 0 0 1 4 0v7" stroke="#3a6ab8" stroke-width="1.2" fill="none"/></svg>
<div class="lt" style="left:114px;top:483px">Address_Ranges</div>
<div class="exp p" style="left:57px;top:500px"></div>
<div class="dh" style="left:67px;top:504px;width:6px"></div>
<div class="cb c" style="left:74px;top:498px"></div>
<svg class="a" style="left:93px;top:496px" width="16" height="16" viewBox="0 0 16 16"><rect x="1" y="5" width="10" height="11" fill="#f3f3f3" stroke="#777"/><rect x="4" y="3" width="10" height="11" fill="#f3f3f3" stroke="#777"/><path d="M8 12V4a2 2 0 0 1 4 0v7" stroke="#3a6ab8" stroke-width="1.2" fill="none"/></svg>
<div class="lt" style="left:114px;top:499px">Feature_Names</div>
<div class="a" style="left:396px;top:132px;width:1524px;height:870px;background:#a0a0a0"></div>
<div class="a" style="left:397px;top:133px;width:1521px;height:868px;overflow:hidden;background:#fff">
<svg class="a" style="left:-397px;top:-133px" width="1920" height="1080" viewBox="0 0 1920 1080">
<polygon points="708.3,132.0 820.0,132.0 820.0,199.5 907.5,199.5 1053.8,272.5 1180.0,213.8 1198.8,204.2 1274.5,204.2 1275.2,407.8 1275.2,430.1 1199.6,431.7 1199.6,450.4 1211.8,449.3 1211.8,498.3 1268.3,501.5 1268.3,548.0 1117.0,531.2 1030.0,515.0 930.0,490.0 850.0,440.0 790.0,375.0 751.7,300.0 736.7,266.7 721.7,233.3 709.2,186.7 706.7,163.3" fill="#f8f9ec"/>
<polygon points="1275.2,407.8 1305.5,405.6 1306.0,435.5 1305.0,471.1 1305.0,480.2 1304.5,510.0 1303.8,547.0 1268.3,547.0 1268.3,501.5 1211.8,498.3 1211.8,449.3 1199.6,450.4 1199.6,431.7 1275.2,430.1" fill="#f9dde0"/>
<polygon points="1274.7,471.1 1305.0,471.1 1305.0,480.2 1274.7,480.2" fill="#f8f9ec"/>
<polyline points="708.3,132.0 820.0,132.0 820.0,199.5 907.5,199.5 1053.8,272.5 1180.0,213.8 1198.8,204.2 1274.5,204.2 1275.2,407.8 1275.2,430.1 1199.6,431.7 1199.6,450.4 1211.8,449.3 1211.8,498.3 1268.3,501.5 1268.3,547.0" stroke="#9ad89a" stroke-width="1" fill="none"/>
<polyline points="708.3,132.0 820.0,132.0 820.0,199.5 907.5,199.5 1053.8,272.5 1180.0,213.8 1198.8,204.2 1274.5,204.2 1275.2,407.8 1275.2,430.1 1199.6,431.7 1199.6,450.4 1211.8,449.3 1211.8,498.3 1268.3,501.5 1268.3,547.0" stroke="#2f4f2f" stroke-width="1.2" stroke-dasharray="3.7 2.3 1 2 1 1.85" fill="none"/>
<polyline points="1275.2,407.8 1305.5,405.6 1306.0,435.5 1305.0,471.1 1274.7,471.1 1274.7,480.2 1305.0,480.2 1304.5,510.0 1303.8,547.0" stroke="#2f4f2f" stroke-width="1.2" stroke-dasharray="3.7 2.3 1 2 1 1.85" fill="none"/>
<polygon points="646.7,132.0 648.3,171.7 653.3,196.7 666.7,233.3 678.3,263.3 690.8,300.0 720.0,375.0 770.0,450.0 850.0,505.0 950.0,540.0 1040.0,560.0 1117.0,573.8 1200.0,580.5 1280.0,587.5 1346.7,592.5 1413.3,596.7 1480.0,600.0 1546.7,608.3 1600.0,617.0 1666.7,631.7 1733.3,646.7 1800.0,661.7 1866.7,680.8 1925.0,706.0 1925.0,651.5 1866.7,634.2 1800.0,617.5 1733.3,600.0 1666.7,586.7 1600.0,572.5 1546.7,566.7 1480.0,560.8 1413.3,555.8 1346.7,550.0 1280.0,547.5 1200.0,539.5 1117.0,531.2 1030.0,515.0 930.0,490.0 850.0,440.0 790.0,375.0 751.7,300.0 736.7,266.7 721.7,233.3 709.2,186.7 706.7,163.3 708.3,132.0" fill="#c6d6e9"/>
<polyline points="646.7,132.0 648.3,171.7 653.3,196.7 666.7,233.3 678.3,263.3 690.8,300.0 720.0,375.0 770.0,450.0 850.0,505.0 950.0,540.0 1040.0,560.0 1117.0,573.8 1200.0,580.5 1280.0,587.5 1346.7,592.5 1413.3,596.7 1480.0,600.0 1546.7,608.3 1600.0,617.0 1666.7,631.7 1733.3,646.7 1800.0,661.7 1866.7,680.8 1925.0,706.0" stroke="#9ad89a" stroke-width="1" fill="none"/>
<polyline points="646.7,132.0 648.3,171.7 653.3,196.7 666.7,233.3 678.3,263.3 690.8,300.0 720.0,375.0 770.0,450.0 850.0,505.0 950.0,540.0 1040.0,560.0 1117.0,573.8 1200.0,580.5 1280.0,587.5 1346.7,592.5 1413.3,596.7 1480.0,600.0 1546.7,608.3 1600.0,617.0 1666.7,631.7 1733.3,646.7 1800.0,661.7 1866.7,680.8 1925.0,706.0" stroke="#2f4f2f" stroke-width="1.2" stroke-dasharray="3.7 2.3 1 2 1 1.85" fill="none"/>
<polyline points="708.3,132.0 706.7,163.3 709.2,186.7 721.7,233.3 736.7,266.7 751.7,300.0 790.0,375.0 850.0,440.0 930.0,490.0 1030.0,515.0 1117.0,531.2 1200.0,539.5 1280.0,547.5 1346.7,550.0 1413.3,555.8 1480.0,560.8 1546.7,566.7 1600.0,572.5 1666.7,586.7 1733.3,600.0 1800.0,617.5 1866.7,634.2 1925.0,651.5" stroke="#9ad89a" stroke-width="1" fill="none"/>
<polyline points="708.3,132.0 706.7,163.3 709.2,186.7 721.7,233.3 736.7,266.7 751.7,300.0 790.0,375.0 850.0,440.0 930.0,490.0 1030.0,515.0 1117.0,531.2 1200.0,539.5 1280.0,547.5 1346.7,550.0 1413.3,555.8 1480.0,560.8 1546.7,566.7 1600.0,572.5 1666.7,586.7 1733.3,600.0 1800.0,617.5 1866.7,634.2 1925.0,651.5" stroke="#2f4f2f" stroke-width="1.2" stroke-dasharray="3.7 2.3 1 2 1 1.85" fill="none"/>
<polyline points="677.5,132.0 678.3,171.7 681.7,191.7 693.3,233.3 706.7,268.3 722.5,300.0 755.0,375.0 810.0,445.0 890.0,497.0 990.0,527.0 1117.0,552.5 1200.0,560.5 1280.0,567.5 1346.7,570.0 1413.3,575.8 1480.0,580.8 1546.7,587.5 1600.0,595.0 1666.7,605.0 1733.3,619.2 1800.0,635.0 1866.7,657.5 1925.0,680.0" stroke="#9ad89a" stroke-width="1" fill="none"/>
<polyline points="677.5,132.0 678.3,171.7 681.7,191.7 693.3,233.3 706.7,268.3 722.5,300.0 755.0,375.0 810.0,445.0 890.0,497.0 990.0,527.0 1117.0,552.5 1200.0,560.5 1280.0,567.5 1346.7,570.0 1413.3,575.8 1480.0,580.8 1546.7,587.5 1600.0,595.0 1666.7,605.0 1733.3,619.2 1800.0,635.0 1866.7,657.5 1925.0,680.0" stroke="#2f4f2f" stroke-width="1.2" stroke-dasharray="3.7 2.3 1 2 1 1.85" fill="none"/>
<path d="M1267.5 566.25 L1267.5 585" stroke="#2f4f2f" stroke-width="1.2" stroke-dasharray="3.7 2.3 1 2 1 1.85" fill="none"/>
<path d="M1639.2 563.3 L1698.3 637.5" stroke="#2f4f2f" stroke-width="1.2" stroke-dasharray="3.7 2.3 1 2 1 1.85" fill="none"/>
<polygon points="596.3,595.3 607.5,597.8 615.6,597.3 624.8,599.9 630.9,604.4 641.1,607.5 656.4,606.0 671.6,600.4 681.8,595.3 697.1,588.1 712.4,582.0 792.5,556.0 830.0,545.0 830.0,558.0 817.2,561.9 720.0,586.1 692.0,595.3 680.8,601.4 676.7,607.5 676.7,613.6 680.8,625.8 681.8,638.0 676.7,644.2 669.6,646.2 660.4,642.1 651.3,636.5 643.1,637.0 630.9,644.2 622.8,651.3 617.7,660.4 614.6,663.0 611.6,659.4 606.5,651.3 602.4,643.1 604.4,620.7 608.0,600.4" fill="#c6d6e9" stroke="#9ad89a" stroke-width="1"/>
<polygon points="596.3,595.3 607.5,597.8 615.6,597.3 624.8,599.9 630.9,604.4 641.1,607.5 656.4,606.0 671.6,600.4 681.8,595.3 697.1,588.1 712.4,582.0 792.5,556.0 830.0,545.0 830.0,558.0 817.2,561.9 720.0,586.1 692.0,595.3 680.8,601.4 676.7,607.5 676.7,613.6 680.8,625.8 681.8,638.0 676.7,644.2 669.6,646.2 660.4,642.1 651.3,636.5 643.1,637.0 630.9,644.2 622.8,651.3 617.7,660.4 614.6,663.0 611.6,659.4 606.5,651.3 602.4,643.1 604.4,620.7 608.0,600.4" stroke="#2f4f2f" stroke-width="1.2" stroke-dasharray="3.7 2.3 1 2 1 1.85" fill="none"/>
<polyline points="607.5,597.8 615.6,602.4 625.8,607.5 636.0,612.6 646.2,614.1 659.4,612.6 669.6,607.5 681.8,599.3 697.1,592.2 720.0,585.1 808.3,556.4 830.0,550.0" stroke="#9ad89a" stroke-width="1" fill="none"/>
<polyline points="607.5,597.8 615.6,602.4 625.8,607.5 636.0,612.6 646.2,614.1 659.4,612.6 669.6,607.5 681.8,599.3 697.1,592.2 720.0,585.1 808.3,556.4 830.0,550.0" stroke="#2f4f2f" stroke-width="1.2" stroke-dasharray="3.7 2.3 1 2 1 1.85" fill="none"/>
<polygon points="460.0,132.0 476.0,147.5 488.5,147.5 497.0,132.0" fill="#c6d6e9" stroke="#9ad89a" stroke-width="1"/>
<polygon points="460.0,132.0 476.0,147.5 488.5,147.5 497.0,132.0" stroke="#2f4f2f" stroke-width="1.2" stroke-dasharray="3.7 2.3 1 2 1 1.85" fill="none"/>
<polygon points="526.0,865.5 532.6,862.6 538.3,851.2 551.6,855.0 559.2,860.7 567.7,875.0 564.9,882.5 545.9,881.6 532.6,876.9" fill="#c6d6e9" stroke="#9ad89a" stroke-width="1"/>
<polygon points="526.0,865.5 532.6,862.6 538.3,851.2 551.6,855.0 559.2,860.7 567.7,875.0 564.9,882.5 545.9,881.6 532.6,876.9" stroke="#2f4f2f" stroke-width="1.2" stroke-dasharray="3.7 2.3 1 2 1 1.85" fill="none"/>
<polygon points="390.0,893.0 413.0,897.7 430.2,899.6 431.1,906.3 428.3,913.9 413.0,913.9 390.0,913.9" fill="#c6d6e9" stroke="#9ad89a" stroke-width="1"/>
<polygon points="390.0,893.0 413.0,897.7 430.2,899.6 431.1,906.3 428.3,913.9 413.0,913.9 390.0,913.9" stroke="#2f4f2f" stroke-width="1.2" stroke-dasharray="3.7 2.3 1 2 1 1.85" fill="none"/>
<polyline points="624.8,678.3 651.3,666.6 689.5,655.9 690.0,664.5 722.0,670.5 728.0,665.5 737.5,662.5 747.5,666.2 798.9,726.8 827.1,752.3 832.8,765.0 835.6,773.4 862.4,815.8 870.9,845.5 869.5,859.6 845.5,873.7" fill="none" stroke="#a29e80" stroke-width="4.6" stroke-linejoin="round"/>
<polyline points="624.8,678.3 651.3,666.6 689.5,655.9 690.0,664.5 722.0,670.5 728.0,665.5 737.5,662.5 747.5,666.2 798.9,726.8 827.1,752.3 832.8,765.0 835.6,773.4 862.4,815.8 870.9,845.5 869.5,859.6 845.5,873.7" fill="none" stroke="#fff7c4" stroke-width="2.6" stroke-linejoin="round"/>
<polygon points="624.8,678.3 651.3,666.6 689.5,655.9 690.0,664.5 722.0,670.5 728.0,665.5 737.5,662.5 747.5,666.2 798.9,726.8 827.1,752.3 832.8,765.0 835.6,773.4 862.4,815.8 870.9,845.5 869.5,859.6 845.5,873.7 779.1,846.9 721.2,817.2 678.5,785.0 661.0,775.0 646.0,760.0 629.8,745.0 626.0,737.5" fill="#6cb33a" stroke="#1c2e14" stroke-width="1.4"/>
<path d="M406.5 133.0 L407.5 155.0 L412.5 171.0 L418.0 181.0 L428.5 187.0 L478.5 201.0 L498.5 210.5 L506.0 225.0 L506.0 240.0 L507.0 280.0 L505.0 302.5 L505.0 339.0 L504.8 507.5" fill="none" stroke="#3b70c2" stroke-width="1.5" stroke-linejoin="round"/>
<path d="M398.0 190.0 L418.5 207.5 L437.0 217.5 L462.0 227.5 L472.0 236.0" fill="none" stroke="#3b70c2" stroke-width="1.5" stroke-linejoin="round"/>
<path d="M398.0 302.5 L505.0 302.5" fill="none" stroke="#3b70c2" stroke-width="1.5" stroke-linejoin="round"/>
<path d="M505.0 339.0 L517.0 339.0 L526.0 329.0 L535.0 326.0 L542.0 325.0 L548.5 320.0 L551.0 305.0 L558.5 290.0 L558.5 285.0" fill="none" stroke="#3b70c2" stroke-width="1.5" stroke-linejoin="round"/>
<path d="M517.0 339.0 L523.5 350.0 L532.0 360.0 L543.5 377.5 L553.5 389.0 L566.0 399.5 L578.5 404.5 L611.0 404.5 L623.5 408.0 L660.0 419.0" fill="none" stroke="#3b70c2" stroke-width="1.5" stroke-linejoin="round"/>
<path d="M624.2 302.0 L627.8 306.1 L636.7 312.2 L641.1 317.8 L642.2 330.0 L642.0 331.7 L644.4 336.1 L650.0 340.0" fill="none" stroke="#3b70c2" stroke-width="1.5" stroke-linejoin="round"/>
<path d="M596.3 595.3 L577.2 602.5 L562.2 617.5 L539.8 633.8 L518.5 638.8 L496.0 648.8 L473.5 677.5 L471.0 705.0 L468.5 715.0 L439.8 747.5 L447.2 772.5 L456.0 782.5 L496.0 802.5 L521.2 821.8 L523.1 840.8 L513.6 859.8 L500.4 867.4 L475.7 885.4 L462.4 898.7 L457.7 909.1 L452.0 913.9 L452.0 921.4 L456.7 934.7 L463.4 943.3 L496.6 962.2 L501.3 974.6 L501.3 981.2 L488.0 995.4 L488.0 1002.0" fill="none" stroke="#3b70c2" stroke-width="1.5" stroke-linejoin="round"/>
<path d="M618.2 660.4 L621.8 663.5 L624.8 676.7" fill="none" stroke="#3b70c2" stroke-width="1.5" stroke-linejoin="round"/>
<path d="M820.0 754.5 L846.9 750.8 L892.1 750.3 L924.6 746.6 L934.5 748.0 L968.4 766.4 L982.5 776.3 L991.0 789.0 L995.2 798.9 L992.4 821.5 L985.3 855.4 L983.9 866.7 L988.1 876.6 L996.6 882.2 L1027.7 896.3 L1044.6 902.0 L1095.5 928.8 L1108.2 938.7" fill="none" stroke="#3b70c2" stroke-width="1.5" stroke-linejoin="round"/>
<path d="M960.0 700.0 L985.0 721.0 L1095.5 824.3 L1131.2 859.2 L1133.0 932.0 L1131.2 939.0 L1134.0 946.0 L1129.5 954.7" fill="none" stroke="#3b70c2" stroke-width="1.5" stroke-linejoin="round"/>
<path d="M846.9 875.1 L892.1 891.5 L954.2 926.0 L991.0 948.6 L1041.8 974.0 L1081.4 1002.0" fill="none" stroke="#3b70c2" stroke-width="1.5" stroke-linejoin="round"/>
<path d="M390.0 905.6 L428.3 913.5" fill="none" stroke="#3b70c2" stroke-width="1.5" stroke-linejoin="round"/>
<path d="M600.0 889.2 L716.0 956.5 L789.0 999.4 L792.0 1002.0" fill="none" stroke="#3b70c2" stroke-width="1.5" stroke-linejoin="round"/>
<path d="M1100.0 655.0 L1117.5 668.8 L1135.0 680.0 L1150.0 696.2 L1162.5 701.2 L1185.0 706.2 L1195.0 703.8 L1225.0 692.5 L1250.0 683.8 L1270.0 680.0 L1282.5 680.0 L1291.2 682.5" fill="none" stroke="#3b70c2" stroke-width="1.5" stroke-linejoin="round"/>
<path d="M1133.8 132.0 L1134.0 230.0 L1136.0 400.0 L1136.2 425.0 L1190.0 451.0 L1196.0 455.0 L1199.5 460.0 L1200.3 466.0 L1197.5 473.0 L1190.0 481.2" fill="none" stroke="#3b70c2" stroke-width="1.5" stroke-linejoin="round"/>
<path d="M1861.2 132.0 L1863.8 180.0 L1870.0 197.5 L1870.8 203.8 L1857.5 216.2 L1853.8 230.0 L1855.0 242.5 L1871.2 275.0 L1892.5 303.8 L1920.0 317.5" fill="none" stroke="#3b70c2" stroke-width="1.5" stroke-linejoin="round"/>
<path d="M1686.7 431.7 L1681.0 436.0 L1678.3 440.0 L1676.7 446.7 L1678.5 453.0 L1683.3 460.0 L1696.7 476.7 L1704.0 480.0 L1713.3 481.5 L1726.7 479.0 L1736.7 473.3 L1768.3 418.3 L1920.0 447.0" fill="none" stroke="#3b70c2" stroke-width="1.5" stroke-linejoin="round"/>
<path d="M1752.8 965.0 L1749.0 971.5 L1746.5 978.0 L1745.5 986.0 L1745.8 1002.0" fill="none" stroke="#3b70c2" stroke-width="1.5" stroke-linejoin="round"/>
<path d="M1626.0 985.9 L1637.0 1002.0" fill="none" stroke="#3b70c2" stroke-width="1.5" stroke-linejoin="round"/>
<path d="M625.0 132.0 L625.0 150.0 L633.3 200.0 L647.5 253.3 L655.0 261.7 L655.0 268.3 L671.7 299.2 L700.0 370.0" fill="none" stroke="#aba88a" stroke-width="5" stroke-linejoin="round"/>
<path d="M390.0 608.8 L530.0 606.8 L540.0 604.5 L547.0 600.0 L553.0 593.0 L559.0 586.5 L566.0 581.0 L574.0 578.0 L582.0 577.5 L640.0 584.0 L650.0 583.5 L658.0 581.5 L668.0 577.5 L680.0 573.8 L764.8 556.0 L800.0 545.0" fill="none" stroke="#aba88a" stroke-width="5" stroke-linejoin="round"/>
<path d="M624.8 678.3 L600.4 676.7 L578.5 672.5 L543.5 655.0 L532.2 654.5 L523.5 660.0 L496.0 698.8 L489.8 720.0 L493.5 745.0 L501.0 762.5 L503.5 763.8 L508.5 781.2 L546.0 805.0 L559.2 820.9 L566.8 841.7 L583.9 872.1 L582.9 895.8 L547.8 921.4 L538.3 932.8 L521.2 982.2 L520.3 991.7 L525.0 1002.0" fill="none" stroke="#aba88a" stroke-width="5" stroke-linejoin="round"/>
<path d="M689.5 655.9 L692.0 654.3 L700.2 646.2 L702.2 637.0 L698.6 625.8 L702.2 617.7 L708.3 612.6 L720.0 610.5 L817.2 586.6 L830.0 583.0" fill="none" stroke="#aba88a" stroke-width="5" stroke-linejoin="round"/>
<path d="M1110.0 577.0 L1117.0 577.5 L1200.0 585.5 L1280.0 594.2 L1346.7 598.3 L1413.3 603.3 L1480.0 609.2 L1546.7 615.0 L1600.0 621.7 L1666.7 634.2 L1733.3 650.0 L1800.0 668.3 L1866.7 691.7 L1925.0 715.0" fill="none" stroke="#aba88a" stroke-width="5" stroke-linejoin="round"/>
<path d="M1143.8 132.0 L1143.8 262.5 L1155.0 280.0 L1180.0 347.5 L1197.5 370.0 L1198.8 380.0 L1201.0 381.0 L1206.0 395.0 L1213.4 406.7 L1214.0 435.5 L1217.7 440.8 L1235.8 445.0 L1269.9 448.2 L1281.6 455.7 L1290.1 460.0" fill="none" stroke="#aba88a" stroke-width="5" stroke-linejoin="round"/>
<path d="M1274.1 480.2 L1286.9 469.5 L1291.2 458.9 L1307.1 436.0 L1320.0 428.0 L1340.0 419.0 L1360.0 413.0 L1380.0 409.5 L1400.0 408.0 L1420.0 407.5 L1600.0 410.0 L1707.5 410.0 L1740.0 412.5 L1770.0 416.2 L1925.0 444.0" fill="none" stroke="#aba88a" stroke-width="5" stroke-linejoin="round"/>
<path d="M1602.0 410.0 L1601.2 447.5 L1615.0 510.0 L1620.0 530.0 L1620.0 550.0 L1622.0 554.5 L1625.0 557.0 L1630.0 560.7 L1638.3 562.7" fill="none" stroke="#aba88a" stroke-width="5" stroke-linejoin="round"/>
<path d="M1883.8 132.0 L1884.5 150.0 L1886.0 165.0 L1889.0 177.0 L1894.0 186.0 L1902.0 197.0 L1910.0 208.0 L1916.0 218.0 L1925.0 232.0" fill="none" stroke="#aba88a" stroke-width="5" stroke-linejoin="round"/>
<path d="M1235.8 445.0 L1239.0 477.0 L1273.0 480.7" fill="none" stroke="#aba88a" stroke-width="5" stroke-linejoin="round"/>
<path d="M1269.3 449.3 L1264.5 456.8 L1264.5 463.2 L1274.1 480.2" fill="none" stroke="#aba88a" stroke-width="5" stroke-linejoin="round"/>
<path d="M625.0 132.0 L625.0 150.0 L633.3 200.0 L647.5 253.3 L655.0 261.7 L655.0 268.3 L671.7 299.2 L700.0 370.0" fill="none" stroke="#f2eebb" stroke-width="3.2" stroke-linejoin="round"/>
<path d="M390.0 608.8 L530.0 606.8 L540.0 604.5 L547.0 600.0 L553.0 593.0 L559.0 586.5 L566.0 581.0 L574.0 578.0 L582.0 577.5 L640.0 584.0 L650.0 583.5 L658.0 581.5 L668.0 577.5 L680.0 573.8 L764.8 556.0 L800.0 545.0" fill="none" stroke="#f2eebb" stroke-width="3.2" stroke-linejoin="round"/>
<path d="M624.8 678.3 L600.4 676.7 L578.5 672.5 L543.5 655.0 L532.2 654.5 L523.5 660.0 L496.0 698.8 L489.8 720.0 L493.5 745.0 L501.0 762.5 L503.5 763.8 L508.5 781.2 L546.0 805.0 L559.2 820.9 L566.8 841.7 L583.9 872.1 L582.9 895.8 L547.8 921.4 L538.3 932.8 L521.2 982.2 L520.3 991.7 L525.0 1002.0" fill="none" stroke="#f2eebb" stroke-width="3.2" stroke-linejoin="round"/>
<path d="M689.5 655.9 L692.0 654.3 L700.2 646.2 L702.2 637.0 L698.6 625.8 L702.2 617.7 L708.3 612.6 L720.0 610.5 L817.2 586.6 L830.0 583.0" fill="none" stroke="#f2eebb" stroke-width="3.2" stroke-linejoin="round"/>
<path d="M1110.0 577.0 L1117.0 577.5 L1200.0 585.5 L1280.0 594.2 L1346.7 598.3 L1413.3 603.3 L1480.0 609.2 L1546.7 615.0 L1600.0 621.7 L1666.7 634.2 L1733.3 650.0 L1800.0 668.3 L1866.7 691.7 L1925.0 715.0" fill="none" stroke="#f2eebb" stroke-width="3.2" stroke-linejoin="round"/>
<path d="M1143.8 132.0 L1143.8 262.5 L1155.0 280.0 L1180.0 347.5 L1197.5 370.0 L1198.8 380.0 L1201.0 381.0 L1206.0 395.0 L1213.4 406.7 L1214.0 435.5 L1217.7 440.8 L1235.8 445.0 L1269.9 448.2 L1281.6 455.7 L1290.1 460.0" fill="none" stroke="#f2eebb" stroke-width="3.2" stroke-linejoin="round"/>
<path d="M1274.1 480.2 L1286.9 469.5 L1291.2 458.9 L1307.1 436.0 L1320.0 428.0 L1340.0 419.0 L1360.0 413.0 L1380.0 409.5 L1400.0 408.0 L1420.0 407.5 L1600.0 410.0 L1707.5 410.0 L1740.0 412.5 L1770.0 416.2 L1925.0 444.0" fill="none" stroke="#f2eebb" stroke-width="3.2" stroke-linejoin="round"/>
<path d="M1602.0 410.0 L1601.2 447.5 L1615.0 510.0 L1620.0 530.0 L1620.0 550.0 L1622.0 554.5 L1625.0 557.0 L1630.0 560.7 L1638.3 562.7" fill="none" stroke="#f2eebb" stroke-width="3.2" stroke-linejoin="round"/>
<path d="M1883.8 132.0 L1884.5 150.0 L1886.0 165.0 L1889.0 177.0 L1894.0 186.0 L1902.0 197.0 L1910.0 208.0 L1916.0 218.0 L1925.0 232.0" fill="none" stroke="#f2eebb" stroke-width="3.2" stroke-linejoin="round"/>
<path d="M1235.8 445.0 L1239.0 477.0 L1273.0 480.7" fill="none" stroke="#f2eebb" stroke-width="3.2" stroke-linejoin="round"/>
<path d="M1269.3 449.3 L1264.5 456.8 L1264.5 463.2 L1274.1 480.2" fill="none" stroke="#f2eebb" stroke-width="3.2" stroke-linejoin="round"/>
<path d="M625.0 132.0 L625.0 150.0 L633.3 200.0 L647.5 253.3 L655.0 261.7 L655.0 268.3 L671.7 299.2 L700.0 370.0" fill="none" stroke="#c3e8c4" stroke-width="1.3" stroke-linejoin="round"/>
<path d="M390.0 608.8 L530.0 606.8 L540.0 604.5 L547.0 600.0 L553.0 593.0 L559.0 586.5 L566.0 581.0 L574.0 578.0 L582.0 577.5 L640.0 584.0 L650.0 583.5 L658.0 581.5 L668.0 577.5 L680.0 573.8 L764.8 556.0 L800.0 545.0" fill="none" stroke="#c3e8c4" stroke-width="1.3" stroke-linejoin="round"/>
<path d="M624.8 678.3 L600.4 676.7 L578.5 672.5 L543.5 655.0 L532.2 654.5 L523.5 660.0 L496.0 698.8 L489.8 720.0 L493.5 745.0 L501.0 762.5 L503.5 763.8 L508.5 781.2 L546.0 805.0 L559.2 820.9 L566.8 841.7 L583.9 872.1 L582.9 895.8 L547.8 921.4 L538.3 932.8 L521.2 982.2 L520.3 991.7 L525.0 1002.0" fill="none" stroke="#c3e8c4" stroke-width="1.3" stroke-linejoin="round"/>
<path d="M689.5 655.9 L692.0 654.3 L700.2 646.2 L702.2 637.0 L698.6 625.8 L702.2 617.7 L708.3 612.6 L720.0 610.5 L817.2 586.6 L830.0 583.0" fill="none" stroke="#c3e8c4" stroke-width="1.3" stroke-linejoin="round"/>
<path d="M1110.0 577.0 L1117.0 577.5 L1200.0 585.5 L1280.0 594.2 L1346.7 598.3 L1413.3 603.3 L1480.0 609.2 L1546.7 615.0 L1600.0 621.7 L1666.7 634.2 L1733.3 650.0 L1800.0 668.3 L1866.7 691.7 L1925.0 715.0" fill="none" stroke="#c3e8c4" stroke-width="1.3" stroke-linejoin="round"/>
<path d="M1143.8 132.0 L1143.8 262.5 L1155.0 280.0 L1180.0 347.5 L1197.5 370.0 L1198.8 380.0 L1201.0 381.0 L1206.0 395.0 L1213.4 406.7 L1214.0 435.5 L1217.7 440.8 L1235.8 445.0 L1269.9 448.2 L1281.6 455.7 L1290.1 460.0" fill="none" stroke="#c3e8c4" stroke-width="1.3" stroke-linejoin="round"/>
<path d="M1274.1 480.2 L1286.9 469.5 L1291.2 458.9 L1307.1 436.0 L1320.0 428.0 L1340.0 419.0 L1360.0 413.0 L1380.0 409.5 L1400.0 408.0 L1420.0 407.5 L1600.0 410.0 L1707.5 410.0 L1740.0 412.5 L1770.0 416.2 L1925.0 444.0" fill="none" stroke="#c3e8c4" stroke-width="1.3" stroke-linejoin="round"/>
<path d="M1602.0 410.0 L1601.2 447.5 L1615.0 510.0 L1620.0 530.0 L1620.0 550.0 L1622.0 554.5 L1625.0 557.0 L1630.0 560.7 L1638.3 562.7" fill="none" stroke="#c3e8c4" stroke-width="1.3" stroke-linejoin="round"/>
<path d="M1883.8 132.0 L1884.5 150.0 L1886.0 165.0 L1889.0 177.0 L1894.0 186.0 L1902.0 197.0 L1910.0 208.0 L1916.0 218.0 L1925.0 232.0" fill="none" stroke="#c3e8c4" stroke-width="1.3" stroke-linejoin="round"/>
<path d="M1235.8 445.0 L1239.0 477.0 L1273.0 480.7" fill="none" stroke="#c3e8c4" stroke-width="1.3" stroke-linejoin="round"/>
<path d="M1269.3 449.3 L1264.5 456.8 L1264.5 463.2 L1274.1 480.2" fill="none" stroke="#c3e8c4" stroke-width="1.3" stroke-linejoin="round"/>
<path d="M1136.2 578.0 L1136.5 779.3 L1129.5 793.2 L1125.0 810.6 L1136.5 829.7" fill="none" stroke="#a9a687" stroke-width="5" stroke-linejoin="round" stroke-linecap="round"/>
<path d="M845.5 873.7 L837.0 892.1 L846.9 923.2 L852.5 954.2" fill="none" stroke="#a9a687" stroke-width="5" stroke-linejoin="round" stroke-linecap="round"/>
<path d="M1312.5 436.5 L1312.5 500.4 L1306.6 500.4" fill="none" stroke="#a9a687" stroke-width="5" stroke-linejoin="round" stroke-linecap="round"/>
<path d="M1262.4 494.0 L1262.4 500.4" fill="none" stroke="#a9a687" stroke-width="5" stroke-linejoin="round" stroke-linecap="round"/>
<path d="M1136.2 578.0 L1136.5 779.3 L1129.5 793.2 L1125.0 810.6 L1136.5 829.7" fill="none" stroke="#fff9c6" stroke-width="3.2" stroke-linejoin="round" stroke-linecap="round"/>
<path d="M845.5 873.7 L837.0 892.1 L846.9 923.2 L852.5 954.2" fill="none" stroke="#fff9c6" stroke-width="3.2" stroke-linejoin="round" stroke-linecap="round"/>
<path d="M1312.5 436.5 L1312.5 500.4 L1306.6 500.4" fill="none" stroke="#fff9c6" stroke-width="3.2" stroke-linejoin="round" stroke-linecap="round"/>
<path d="M1262.4 494.0 L1262.4 500.4" fill="none" stroke="#fff9c6" stroke-width="3.2" stroke-linejoin="round" stroke-linecap="round"/>
<polyline points="1340.0,999.5 1920.0,941.2" fill="none" stroke="#6f7a5f" stroke-width="3.5"/>
<polyline points="1340.0,999.5 1920.0,941.2" fill="none" stroke="#cfe3c0" stroke-width="1.8"/>
<polyline points="1340.0,999.5 1920.0,941.2" fill="none" stroke="#5a6a4a" stroke-width="5" stroke-dasharray="0.8 5.2"/>
<text x="1906" y="190" transform="rotate(62 1906 190)" text-anchor="middle" dominant-baseline="central" font-family="Liberation Sans" font-size="9.3" fill="#111">District Five Mile</text>
<text x="1451" y="403" transform="rotate(0 1451 403)" text-anchor="middle" dominant-baseline="central" font-family="Liberation Sans" font-size="9.3" fill="#111">Mission Rd</text>
<text x="1765" y="411" transform="rotate(9 1765 411)" text-anchor="middle" dominant-baseline="central" font-family="Liberation Sans" font-size="9.3" fill="#111">Mission Rd</text>
<text x="1254" y="440" transform="rotate(7 1254 440)" text-anchor="middle" dominant-baseline="central" font-family="Liberation Sans" font-size="10.5" fill="#111">Pow Wow Trl</text>
<text x="1296" y="447" transform="rotate(-56 1296 447)" text-anchor="middle" dominant-baseline="central" font-family="Liberation Sans" font-size="9.3" fill="#111">Mission Rd</text>
<text x="1616" y="485" transform="rotate(73 1616 485)" text-anchor="middle" dominant-baseline="central" font-family="Liberation Sans" font-size="10.3" fill="#111">Hobbard Rd</text>
<text x="607" y="576" transform="rotate(4 607 576)" text-anchor="middle" dominant-baseline="central" font-family="Liberation Sans" font-size="9.7" fill="#111">Riverside St</text>
<text x="1373" y="594" transform="rotate(3 1373 594)" text-anchor="middle" dominant-baseline="central" font-family="Liberation Sans" font-size="9.7" fill="#111">Riverside St</text>
<text x="1899" y="701" transform="rotate(20 1899 701)" text-anchor="middle" dominant-baseline="central" font-family="Liberation Sans" font-size="9.7" fill="#111">Riverside St</text>
<text x="729" y="580" transform="rotate(-15 729 580)" text-anchor="middle" dominant-baseline="central" font-family="Liberation Sans" font-size="9.3" fill="#3a6fc4">Deep Crk</text>
<text x="785.5" y="589.6" transform="rotate(-17 785.5 589.6)" text-anchor="middle" dominant-baseline="central" font-family="Liberation Sans" font-size="9.3" fill="#111">Mallard Rd</text>
<text x="1141" y="631" transform="rotate(90 1141 631)" text-anchor="middle" dominant-baseline="central" font-family="Liberation Sans" font-size="9.3" fill="#111">Co 18B</text>
<text x="1130" y="760" transform="rotate(-90 1130 760)" text-anchor="middle" dominant-baseline="central" font-family="Liberation Sans" font-size="9.3" fill="#111">Co 18B</text>
<text x="486" y="656" transform="rotate(-50 486 656)" text-anchor="middle" dominant-baseline="central" font-family="Liberation Sans" font-size="9.8" fill="#111">Deep Crk</text>
<text x="478" y="786" transform="rotate(28 478 786)" text-anchor="middle" dominant-baseline="central" font-family="Liberation Sans" font-size="9.8" fill="#111">Deep Crk</text>
<text x="498" y="860" transform="rotate(-37 498 860)" text-anchor="middle" dominant-baseline="central" font-family="Liberation Sans" font-size="9.8" fill="#111">Deep Crk</text>
<text x="461" y="895" transform="rotate(-55 461 895)" text-anchor="middle" dominant-baseline="central" font-family="Liberation Sans" font-size="9.8" fill="#111">Deep Crk</text>
<text x="478" y="943" transform="rotate(38 478 943)" text-anchor="middle" dominant-baseline="central" font-family="Liberation Sans" font-size="9.8" fill="#111">Deep Crk</text>
<text x="1644" y="961.5" transform="rotate(-5.7 1644 961.5)" text-anchor="middle" dominant-baseline="central" font-family="Liberation Sans" font-size="10" fill="#111">Spokane International RR</text>
<text x="1264.75" y="488" text-anchor="middle" dominant-baseline="central" font-family="Liberation Sans" font-size="13.7" fill="#000" stroke="#fff" stroke-width="3" paint-order="stroke" stroke-linejoin="round">Kootenai Reservation(1800)</text>
</svg></div>
<div class="a" style="left:1919px;top:133px;width:1px;height:868px;background:#fafafa"></div>
<div class="a" style="left:818px;top:390px;width:300px;height:330px;background:#f0f0f0;border:1px solid #c8c8c8;box-shadow:2px 3px 14px rgba(0,0,0,0.28)"></div>
<div class="a" style="left:819px;top:391px;width:298px;height:30px;background:#fff"></div>
<div class="t" style="left:894px;top:399px;font-size:11.2px;color:#8d8d8d">Feature</div>
<div class="a" style="left:1098px;top:398px;width:19px;height:19px;background:#e3e3e3"></div>
<svg class="a" style="left:1104px;top:404px" width="7" height="7"><path d="M0.5 0.5l6 6M6.5 0.5l-6 6" stroke="#c0c0c0" stroke-width="1"/></svg>
<div class="a" style="left:860px;top:433px;width:247px;height:22px;border:1px solid #a8a8a8;border-radius:3px;background:linear-gradient(#fbfbfb,#ececec)"></div>
<div class="t" style="left:894px;top:437px;font-size:11px">Reservation / Trust Land</div>
<div class="a" style="left:1085px;top:435px;width:1px;height:18px;background:#d0d0d0"></div>
<svg class="a" style="left:1091px;top:437px" width="9" height="13"><path d="M0.5 5.5l4-5 4 5z M0.5 7.5l4 5 4-5z" fill="#111"/></svg>
<div class="a" style="left:873px;top:469px;width:29px;height:26px;border:1px solid #b4b4b4;border-radius:3px;background:linear-gradient(#f8f8f8,#e6e6e6)"></div>
<div class="a" style="left:908px;top:469px;width:29px;height:26px;border:1px solid #b4b4b4;border-radius:3px;background:linear-gradient(#f8f8f8,#e6e6e6)"></div>
<div class="a" style="left:943px;top:469px;width:29px;height:26px;border:1px solid #b4b4b4;border-radius:3px;background:linear-gradient(#f8f8f8,#e6e6e6)"></div>
<div class="a" style="left:978px;top:469px;width:29px;height:26px;border:1px solid #b4b4b4;border-radius:3px;background:linear-gradient(#f8f8f8,#e6e6e6)"></div>
<div class="a" style="left:1013px;top:469px;width:29px;height:26px;border:1px solid #b4b4b4;border-radius:3px;background:linear-gradient(#f8f8f8,#e6e6e6)"></div>
<div class="a" style="left:1048px;top:469px;width:29px;height:26px;border:1px solid #b4b4b4;border-radius:3px;background:linear-gradient(#f8f8f8,#e6e6e6)"></div>
<div class="a" style="left:1083px;top:469px;width:29px;height:26px;border:1px solid #b4b4b4;border-radius:3px;background:linear-gradient(#f8f8f8,#e6e6e6)"></div>
<div class="a" style="left:886px;top:477px;width:11px;height:11px;border:2px solid #1e7a2e;border-radius:3px;background:#e8f4e8"></div><div class="a" style="left:889px;top:480px;width:4px;height:5px;background:#28a040"></div>
<svg class="a" style="left:912px;top:474px" width="21" height="16" viewBox="0 0 21 16"><rect x="1.5" y="3" width="18" height="10" rx="3" fill="#fff" stroke="#c01010" stroke-width="1.5"/><rect x="4" y="5.5" width="13" height="5" rx="1" fill="#b00000"/></svg>
<svg class="a" style="left:946px;top:473px" width="23" height="18" viewBox="0 0 23 18"><path d="M1.5 16 L11.5 2 L21.5 16 Z" fill="#3a8ae8" stroke="#1a4aa8" stroke-width="1.2" stroke-linejoin="round"/><path d="M5 13 L11.5 4.5 L18 13Z" fill="#6ab0f8"/></svg>
<svg class="a" style="left:981px;top:474px" width="23" height="18" viewBox="0 0 23 18"><path d="M1.5 2 L11.5 16 L21.5 2 Z" fill="#3a8ae8" stroke="#1a4aa8" stroke-width="1.2" stroke-linejoin="round"/><path d="M5 3.5 L11.5 12 L18 3.5Z" fill="#6ab0f8"/></svg>
<svg class="a" style="left:1016px;top:471px" width="23" height="22" viewBox="0 0 23 22"><path d="M2 1 H19 L22 21 H5 Z" fill="#1a5a9a" stroke="#123"/><path d="M6 4 L10 12 L8 20 M10 12 L18 8 M12 2 L14 10 L20 14 M4 14 L12 16" stroke="#e8f020" stroke-width="1.1" fill="none"/><rect x="14" y="13" width="8" height="8" fill="#4a9a5a"/><path d="M18 14.5v5M15.5 17h5" stroke="#fff"/></svg>
<svg class="a" style="left:1052px;top:472px" width="21" height="22" viewBox="0 0 21 22"><rect x="1" y="1" width="19" height="20" fill="#fafafa" stroke="#999"/><path d="M1 5h19M1 9h19M1 13h19M1 17h19M6 1v20M12 1v20" stroke="#aaa" stroke-width="0.8"/><path d="M8 19 L17 4" stroke="#ccc" stroke-width="2"/></svg>
<svg class="a" style="left:1087px;top:472px" width="22" height="22" viewBox="0 0 22 22"><rect x="1" y="1" width="20" height="20" rx="2" fill="#9a9a9a"/><path d="M5 5 L17 17 M17 5 L5 17" stroke="#fff" stroke-width="3.5"/></svg>
<div class="a" style="left:824px;top:503px;width:288px;height:211px;background:#fff;border:1px solid #a8a8a8"></div>
<div class="a" style="left:825px;top:504px;width:286px;height:22px;background:#efefef"></div>
<div class="a" style="left:1034px;top:507px;width:1px;height:16px;background:#d6d6d6"></div>
<div class="t" style="left:919px;top:509px;font-size:11.5px;font-weight:bold">Info</div>
<div class="a" style="left:825px;top:526px;width:211px;height:21px;background:#3399ff"></div>
<div class="t" style="left:829px;top:530px;font-size:11px;color:#fff">1800-Kootenai Off-Reservation Trust Land</div>
<div class="a" style="left:825px;top:547px;width:211px;height:21px;background:#f2f2f2"></div>
<div class="t" style="left:829px;top:551px;font-size:10.8px">1800-Kootenai Reservation</div>
<div class="a" style="left:1036px;top:526px;width:75px;height:187px;background:#fff"></div>
<div class="a" style="left:647px;top:300px;width:246px;height:256px;background:#f0f0f0;border:1px solid #2a7fd5;box-shadow:0 6px 22px rgba(0,0,0,0.32)"></div>
<div class="a" style="left:648px;top:301px;width:244px;height:30px;background:#fff"></div>
<svg class="a" style="left:656px;top:307px" width="16" height="16" viewBox="0 0 16 16"><rect width="16" height="16" fill="#1f6fb8"/><text x="1.5" y="8.3" font-size="5" textLength="13" lengthAdjust="spacingAndGlyphs" font-family="Liberation Sans" fill="#dfe9f5">GUPS</text><rect x="2" y="11" width="12" height="1.5" fill="#fff"/></svg>
<div class="t" style="left:677px;top:309px;font-size:11.3px;color:#000">Create Chan...</div>
<div class="a" style="left:772px;top:315px;width:11px;height:1px;background:#111"></div>
<div class="a" style="left:817px;top:310px;width:11px;height:11px;border:1px solid #111"></div>
<svg class="a" style="left:862px;top:309px" width="13" height="13"><path d="M1 1l11 11M12 1L1 12" stroke="#111" stroke-width="1.1"/></svg>
<div class="t" style="left:659px;top:342px;font-size:11px;color:#f00">* Indicates required field</div>
<div class="t" style="left:620px;width:103px;text-align:right;top:361px;font-size:10px">EFF_DATE :</div>
<svg class="a" style="left:729px;top:367px" width="7" height="7"><path d="M3.5 0.5v6M0.8 2l5.4 3M0.8 5l5.4-3" stroke="#e00" stroke-width="1.1"/></svg>
<div class="t" style="left:620px;width:103px;text-align:right;top:391px;font-size:10px">AUTHTYPE :</div>
<svg class="a" style="left:729px;top:397px" width="7" height="7"><path d="M3.5 0.5v6M0.8 2l5.4 3M0.8 5l5.4-3" stroke="#e00" stroke-width="1.1"/></svg>
<div class="t" style="left:620px;width:103px;text-align:right;top:421px;font-size:10px">COMPTYP :</div>
<svg class="a" style="left:729px;top:427px" width="7" height="7"><path d="M3.5 0.5v6M0.8 2l5.4 3M0.8 5l5.4-3" stroke="#e00" stroke-width="1.1"/></svg>
<div class="t" style="left:620px;width:103px;text-align:right;top:451px;font-size:10px">DOCU :</div>
<svg class="a" style="left:729px;top:457px" width="7" height="7"><path d="M3.5 0.5v6M0.8 2l5.4 3M0.8 5l5.4-3" stroke="#e00" stroke-width="1.1"/></svg>
<div class="t" style="left:620px;width:103px;text-align:right;top:481px;font-size:10px">CHNG_TYPE :</div>
<svg class="a" style="left:729px;top:487px" width="7" height="7"><path d="M3.5 0.5v6M0.8 2l5.4 3M0.8 5l5.4-3" stroke="#e00" stroke-width="1.1"/></svg>
<div class="a" style="left:742px;top:362px;width:110px;height:22px;background:#fff;border:1px solid #b0b0b0;border-radius:3px"></div>
<div class="t" style="left:747px;top:367px;font-size:11px">04/22/2016</div>
<div class="btn" style="left:858px;top:363px;width:23px;height:21px;border-radius:3px"></div>
<svg class="a" style="left:862px;top:366px" width="16" height="16" viewBox="0 0 16 16"><rect x="0.5" y="2" width="15" height="13" fill="#222"/><rect x="2" y="6" width="12" height="8" fill="#fff"/><path d="M2 8.5h12M2 11h12M5 6v8M8 6v8M11 6v8" stroke="#222" stroke-width="0.9"/><rect x="3" y="0" width="2" height="4" fill="#222"/><rect x="11" y="0" width="2" height="4" fill="#222"/></svg>
<div class="btn" style="left:858px;top:453px;width:23px;height:20px;border-radius:3px"></div>
<svg class="a" style="left:866px;top:457px" width="14" height="14" viewBox="0 0 14 14"><path d="M1 4h5l1 2h6v7H1z" fill="#e8c840" stroke="#b09020" stroke-width="0.6"/></svg>
<div class="btn" style="left:715px;top:512px;width:80px;height:31px;border-radius:3px;background:linear-gradient(#f7f7f7,#e4e4e4)"></div>
<svg class="a" style="left:735px;top:515px" width="24" height="22" viewBox="0 0 24 22"><path d="M16 1 H21 C22 1 23 2 23 3 V12 C23 14 22 15 20 15 H10 V20 L1 12 L10 5 V10 H16 Z" fill="#6f8c58" stroke="#33422a" stroke-width="0.9"/><path d="M17 2h4v9" stroke="#8ab060" stroke-width="1.2" fill="none"/></svg>
<div class="t" style="left:761px;top:522px;font-size:11.3px">Ok</div>
<div class="btn" style="left:801px;top:512px;width:80px;height:31px;border-radius:3px;background:linear-gradient(#f7f7f7,#e4e4e4)"></div>
<svg class="a" style="left:814px;top:516px" width="19" height="20" viewBox="0 0 19 20"><path d="M2 3 C4 1 6 2 9 6 C12 2 15 0 17 2 C18 4 14 7 12 10 C14 13 18 16 17 18 C15 20 12 18 9 14 C6 18 3 20 1 18 C0 16 4 13 6 10 C4 7 0 5 2 3Z" fill="#b8474f" stroke="#6a2020" stroke-width="0.8"/></svg>
<div class="t" style="left:837px;top:522px;font-size:11px">Cancel</div>
<div class="a" style="left:742px;top:390px;width:128px;height:22px;background:#fff;border:1px solid #aaa"></div>
<div class="a" style="left:742px;top:391px;width:128px;height:118px;background:#fcfcfc;border:1px solid #a0a0a0;box-shadow:3px 3px 3px rgba(0,0,0,0.35)"></div>
<div class="a" style="left:744px;top:450px;width:122px;height:18px;border-radius:3px;background:linear-gradient(#3d93ea,#2a7ad8)"></div>
<div class="t" style="left:749px;top:396px;font-size:11.2px;color:#111;-webkit-text-stroke:0.25px #111">Select</div>
<div class="t" style="left:749px;top:415px;font-size:11.2px;color:#111;-webkit-text-stroke:0.25px #111">R - Resolution</div>
<div class="t" style="left:749px;top:434px;font-size:11.2px;color:#111;-webkit-text-stroke:0.25px #111">E - Executive Order</div>
<div class="t" style="left:749px;top:453px;font-size:11.2px;color:#fff;-webkit-text-stroke:0.25px #fff">C - BIA Certification</div>
<div class="t" style="left:749px;top:472px;font-size:11.2px;color:#111;-webkit-text-stroke:0.25px #111">D - Deed</div>
<div class="t" style="left:749px;top:491px;font-size:11.2px;color:#111;-webkit-text-stroke:0.25px #111">X - Other</div>
<div class="a" style="left:0;top:1001px;width:1920px;height:39px;background:#f0f0f0"></div>
<div class="t" style="left:5px;top:1015px;font-size:11px">0 feature(s) selected on layer faces_16021.</div>
<div class="a" style="left:973px;top:1011px;width:21px;height:20px;border:1px solid #9a9a9a;border-radius:2px;background:#e6e6e6"></div>
<svg class="a" style="left:976px;top:1013px" width="16" height="16" viewBox="0 0 16 16"><circle cx="8" cy="9" r="5" fill="none" stroke="#222" stroke-width="1.6"/><path d="M4 4 L12 14 M6 2 L9 7" stroke="#222" stroke-width="1.4"/><circle cx="9" cy="11" r="2" fill="#222"/></svg>
<div class="t" style="left:1002px;top:1015px;font-size:11px">Coordinate:</div>
<div class="a" style="left:1069px;top:1012px;width:300px;height:18px;background:#fff;border:1px solid #a5a5a5;border-radius:2px"></div>
<div class="t" style="left:1069px;width:300px;text-align:center;top:1016px;font-size:11.2px">-116.37472,48.70322</div>
<div class="t" style="left:1377px;top:1015px;font-size:11px">Scale</div>
<div class="a" style="left:1415px;top:1012px;width:92px;height:19px;background:#fff;border:1px solid #a5a5a5;border-radius:2px"></div>
<div class="a" style="left:1486px;top:1013px;width:1px;height:17px;background:#c8c8c8"></div>
<svg class="a" style="left:1491px;top:1018px" width="11" height="7"><path d="M1 1l4.5 4.5L10 1" stroke="#111" stroke-width="1.8" fill="none"/></svg>
<div class="t" style="left:1420px;top:1015px;font-size:11px">1:6,819</div>
<div class="t" style="left:1515px;top:1015px;font-size:11px">Rotation:</div>
<div class="a" style="left:1570px;top:1006px;width:107px;height:30px;background:#fff;border:1px solid #a5a5a5;border-radius:2px"></div>
<div class="a" style="left:1659px;top:1007px;width:1px;height:28px;background:#d0d0d0"></div>
<div class="a" style="left:1660px;top:1021px;width:16px;height:1px;background:#d0d0d0"></div>
<svg class="a" style="left:1663px;top:1010px" width="10" height="24"><path d="M1 6l4-4 4 4z M1 17l4 4 4-4z" fill="#111"/></svg>
<div class="t" style="left:1576px;top:1015px;font-size:11px">0.0</div>
<div class="cb c" style="left:1685px;top:1015px"></div>
<div class="t" style="left:1701px;top:1015px;font-size:11px">Render</div>
<svg class="a" style="left:1752px;top:1013px" width="16" height="16" viewBox="0 0 16 16"><circle cx="8" cy="8" r="6.5" fill="none" stroke="#222" stroke-width="1.4"/><path d="M1 8h14M8 1v14" stroke="#222" stroke-width="1"/><ellipse cx="8" cy="8" rx="3" ry="6.5" fill="none" stroke="#222"/></svg>
<div class="t" style="left:1772px;top:1015px;font-size:10.4px">EPSG:4269 (OTF)</div>
<svg class="a" style="left:1882px;top:1014px" width="18" height="15" viewBox="0 0 18 15"><ellipse cx="9" cy="6.5" rx="8" ry="6" fill="#8a8a8a"/><path d="M4 10 L2 14 L8 11z" fill="#8a8a8a"/></svg>
<div class="a" style="left:0;top:1040px;width:1920px;height:40px;background:#07080b"></div>
<svg class="a" style="left:15px;top:1052px" width="17" height="16"><path d="M0.5 2.3 L6.8 1.4 V7.4 H0.5Z M8 1.2 L16.5 0 V7.4 H8Z M0.5 8.6 H6.8 V14.6 L0.5 13.7Z M8 8.6 H16.5 V16 L8 14.8Z" fill="#fff"/></svg>
<div class="a" style="left:48px;top:1040px;width:344px;height:40px;background:#333333"></div>
<div class="a" style="left:57px;top:1049px;width:22px;height:22px;border:3px solid #fff;border-radius:50%"></div>
<div class="t" style="left:84px;top:1053px;font-size:14.6px;line-height:17px;color:#a6a6a6">Ask me anything</div>
<svg class="a" style="left:365px;top:1051px" width="12" height="18"><rect x="3.5" y="0.7" width="5" height="10" rx="2.5" fill="none" stroke="#999" stroke-width="1.1"/><path d="M1 8 C1 13 11 13 11 8 M6 12.5 V16 M3 16.5 H9" stroke="#999" stroke-width="1.1" fill="none"/></svg>
<svg class="a" style="left:405px;top:1052px" width="22" height="16"><rect x="4" y="1" width="14" height="14" fill="none" stroke="#fff" stroke-width="1.6"/><path d="M1 3v10M21 3v10" stroke="#fff" stroke-width="1.4"/></svg>
<svg class="a" style="left:455px;top:1049px" width="24" height="22" viewBox="0 0 24 22"><rect x="1" y="3" width="22" height="17" fill="#5ab0e8" stroke="#2a78b8"/><circle cx="8" cy="10" r="4" fill="#fff"/><path d="M8 10 V6 A4 4 0 0 1 12 10Z" fill="#f0a030"/><path d="M14 7h7M14 10h7M14 13h7" stroke="#fff" stroke-width="1.5"/><rect x="1" y="17" width="22" height="3" fill="#2a78b8"/></svg>
<svg class="a" style="left:505px;top:1048px" width="24" height="24" viewBox="0 0 24 24"><path d="M12 1 C5 1 1 6 1 12 C1 19 6 23 12 23 C16 23 19 22 22 19 V15 C19 17 16 18 13 18 C9 18 6 16 6 13 H23 V11 C23 5 19 1 12 1Z M6 10 C6.5 7 9 5 12 5 C15 5 17 7 17 10Z" fill="#1a86d8"/></svg>
<svg class="a" style="left:553px;top:1049px" width="24" height="22" viewBox="0 0 24 22"><path d="M1 4h8l2 2h12v15H1z" fill="#f8d060"/><rect x="1" y="8" width="22" height="13" fill="#fbe08a"/><rect x="8" y="14" width="8" height="7" fill="#2a8ad8"/></svg>
<svg class="a" style="left:602px;top:1049px" width="24" height="24" viewBox="0 0 24 24"><rect x="2" y="1" width="20" height="22" rx="2" fill="#4a8ad0"/><circle cx="12" cy="12" r="7" fill="#f08030"/><path d="M10 8 L16 12 L10 16Z" fill="#fff"/></svg>
<svg class="a" style="left:650px;top:1048px" width="24" height="24" viewBox="0 0 24 24"><rect x="2" y="1" width="20" height="22" rx="2" fill="#b83a6a"/><circle cx="10" cy="10" r="4" fill="none" stroke="#fff" stroke-width="2"/><path d="M13 13 L20 20 M17 17 L19 15" stroke="#fff" stroke-width="2"/></svg>
<svg class="a" style="left:700px;top:1048px" width="24" height="24" viewBox="0 0 24 24"><rect x="2" y="1" width="21" height="22" rx="1" fill="#f0f0f0" stroke="#2a8a4a"/><rect x="1" y="4" width="13" height="16" fill="#1e7a3e"/><path d="M4 8 L11 16 M11 8 L4 16" stroke="#fff" stroke-width="2"/><path d="M15 7h6M15 11h6M15 15h6" stroke="#2a8a4a"/></svg>
<svg class="a" style="left:749px;top:1047px" width="24" height="25" viewBox="0 0 24 25"><path d="M3 8 H21 L20 23 H4Z" fill="#fff"/><path d="M8 8 C8 3 16 3 16 8" stroke="#fff" stroke-width="1.8" fill="none"/><path d="M8 12h3.5v3.5H8zM12.5 12H16v3.5h-3.5zM8 16.5h3.5V20H8zM12.5 16.5H16V20h-3.5z" fill="#111"/></svg>
<div class="a" style="left:790px;top:1077px;width:40px;height:3px;background:#76b9ed"></div>
<svg class="a" style="left:798px;top:1048px" width="24" height="24" viewBox="0 0 24 24"><rect x="3" y="1" width="20" height="22" rx="1" fill="#f0f4fa" stroke="#2a5aa8"/><rect x="1" y="5" width="14" height="15" fill="#2a5aa8"/><text x="2" y="17" font-size="11" font-weight="bold" font-family="Liberation Sans" fill="#fff">W</text><path d="M16 8h5M16 11h5M16 14h5" stroke="#2a5aa8"/></svg>
<svg class="a" style="left:846px;top:1048px" width="24" height="24" viewBox="0 0 24 24"><rect x="1" y="5" width="22" height="17" fill="#f8d060"/><path d="M1 5 L12 13 L23 5" stroke="#c89a20" fill="none"/><circle cx="13" cy="14" r="6" fill="#fff" stroke="#f0a020" stroke-width="1.5"/><path d="M13 11v3h3" stroke="#f0a020" stroke-width="1.3" fill="none"/></svg>
<svg class="a" style="left:895px;top:1048px" width="24" height="24" viewBox="0 0 24 24"><rect x="2" y="1" width="21" height="22" rx="1" fill="#fff" stroke="#d04a2a"/><rect x="1" y="4" width="15" height="16" fill="#d04a2a"/><circle cx="16" cy="12" r="4" fill="#fff"/><path d="M16 12V8a4 4 0 0 1 4 4z" fill="#d04a2a"/><path d="M4 8v8M4 8h3a2 2 0 0 1 0 4H4" stroke="#fff" stroke-width="1.5" fill="none"/></svg>
<svg class="a" style="left:945px;top:1048px" width="24" height="24" viewBox="0 0 24 24"><circle cx="12" cy="12" r="11" fill="#db4437"/><path d="M12 12 L21.5 6.5 A11 11 0 0 1 12 23Z" fill="#0f9d58"/><path d="M12 12 L12 23 A11 11 0 0 1 2.5 6.5Z" fill="#f4c20d"/><path d="M12 12 L2.5 6.5 A11 11 0 0 1 21.5 6.5Z" fill="#db4437"/><circle cx="12" cy="12" r="5" fill="#fff"/><circle cx="12" cy="12" r="3.8" fill="#4285f4"/></svg>
<div class="a" style="left:983px;top:1040px;width:47px;height:40px;background:#2c2c2c"></div>
<div class="a" style="left:983px;top:1077px;width:47px;height:3px;background:#76b9ed"></div>
<svg class="a" style="left:994px;top:1047px" width="24" height="25" viewBox="0 0 24 25"><path d="M4 20 C1 13 3 5 11 3 C15 2 19 3 21 5 C15 6 11 11 10 18Z" fill="#b8d838"/><circle cx="9" cy="12" r="6" fill="none" stroke="#f0d020" stroke-width="3"/><path d="M12 15 L17 22" stroke="#f0d020" stroke-width="3"/><path d="M13 4 L20 0" stroke="#3a8a1a" stroke-width="2"/></svg>
<svg class="a" style="left:1640px;top:1050px" width="14" height="20"><rect x="3" y="1" width="7" height="4" fill="none" stroke="#fff"/><rect x="1.5" y="5" width="10" height="13" rx="1" fill="none" stroke="#fff" stroke-width="1.2"/></svg>
<svg class="a" style="left:1661px;top:1053px" width="20" height="13"><path d="M4 12 C0 12 0 6 4 6 C5 1 12 0 14 4 C18 3 20 7 18 10 C18 12 16 12 15 12Z" fill="#999"/></svg>
<svg class="a" style="left:1686px;top:1051px" width="18" height="18"><circle cx="9" cy="9" r="7.5" fill="none" stroke="#fff" stroke-width="1.4"/><circle cx="9" cy="9" r="4.5" fill="none" stroke="#fff" stroke-width="1.2"/><circle cx="9" cy="9" r="1.5" fill="#fff"/></svg>
<svg class="a" style="left:1709px;top:1050px" width="20" height="20"><path d="M10 1 C11 1 12 2 12 4 V8 L19 12 V14 L12 12 V16 L14 18 V19 L10 18 L6 19 V18 L8 16 V12 L1 14 V12 L8 8 V4 C8 2 9 1 10 1Z" fill="none" stroke="#fff" stroke-width="1.1"/></svg>
<svg class="a" style="left:1733px;top:1050px" width="20" height="20"><circle cx="9" cy="11" r="8" fill="#f0c020"/><circle cx="9" cy="11" r="4" fill="#3a8a3a"/><path d="M7 11 L9 13 L14 6" stroke="#fff" stroke-width="2" fill="none"/></svg>
<svg class="a" style="left:1757px;top:1050px" width="20" height="20"><rect x="1" y="3" width="16" height="15" fill="#d02020"/><path d="M4 14 C8 6 10 6 14 14" stroke="#fff" stroke-width="1.5" fill="none"/></svg>
<svg class="a" style="left:1782px;top:1051px" width="20" height="18"><path d="M1 6h4l5-4v14l-5-4H1z" fill="none" stroke="#fff" stroke-width="1.2"/><path d="M13 5 C15 7 15 11 13 13 M15 3 C18 6 18 12 15 15" stroke="#fff" stroke-width="1.1" fill="none"/></svg>
<div class="t" style="left:1814px;top:1043px;font-size:12px;line-height:15px;color:#fff">2:25 PM</div>
<div class="t" style="left:1809px;top:1061px;font-size:12px;line-height:15px;color:#fff">12/7/2016</div>
<svg class="a" style="left:1878px;top:1051px" width="19" height="19"><path d="M1 1.5h17v12H8l-5 4v-4H1z" fill="none" stroke="#fff" stroke-width="1.3"/></svg>
</body></html>
